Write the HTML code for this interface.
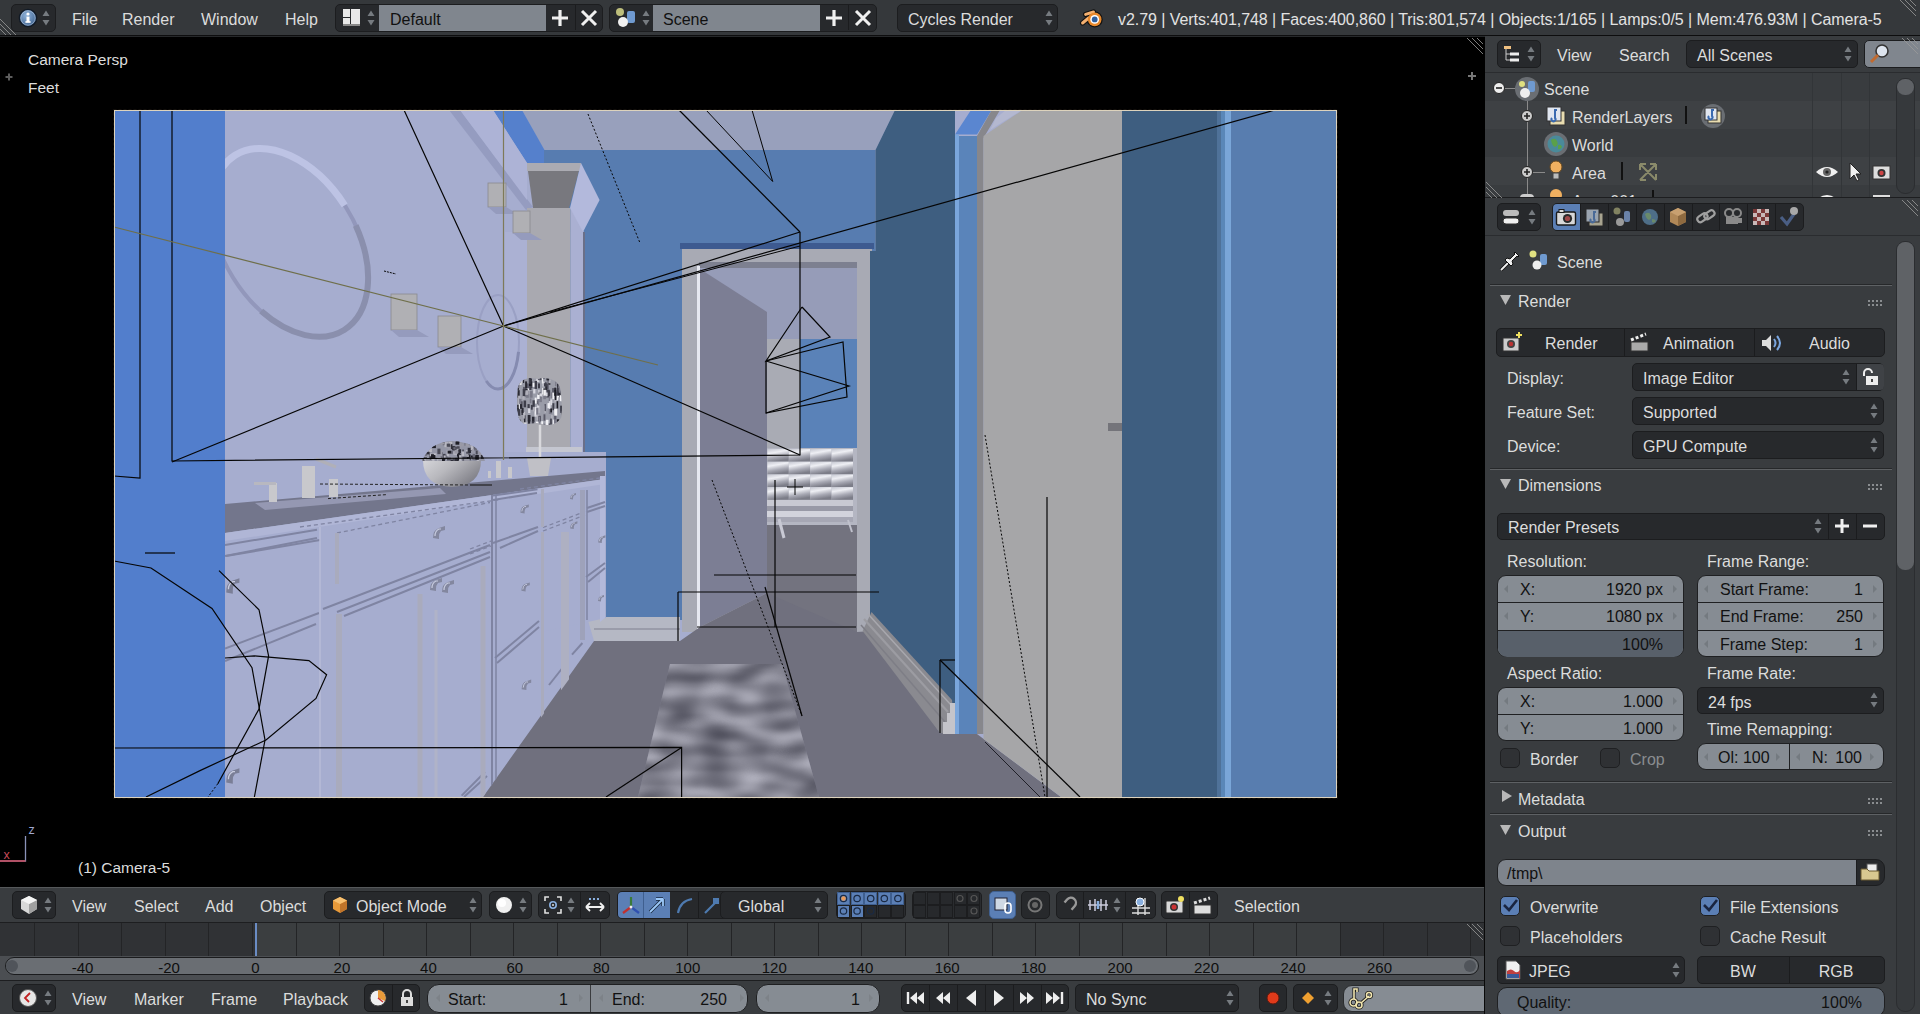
<!DOCTYPE html>
<html><head><meta charset="utf-8"><style>
html,body{margin:0;padding:0;width:1920px;height:1014px;overflow:hidden;background:#000;}
body{position:relative;font-family:"Liberation Sans",sans-serif;}
.r{position:absolute;box-sizing:border-box;}
.t{position:absolute;white-space:nowrap;line-height:1;}
</style></head><body>
<div class="r" style="left:0px;top:0px;width:1920px;height:35px;background:#35383b;"></div>
<div class="r" style="left:0px;top:35px;width:1920px;height:1px;background:#0d0d0e;"></div>
<div class="r" style="left:0px;top:36px;width:1920px;height:1px;background:#26282a;"></div>
<div class="r" style="left:11px;top:4px;width:45px;height:28px;background:#27292c;border:1px solid #1c1d1f;border-radius:5px;"></div>
<svg class="r" style="left:18px;top:8px;" width="20" height="20" viewBox="0 0 20 20"><defs><radialGradient id="ig" cx="0.4" cy="0.35" r="0.7"><stop offset="0" stop-color="#8fb3db"/><stop offset="1" stop-color="#3b5f8c"/></radialGradient></defs><circle cx="10" cy="10" r="8.6" fill="url(#ig)" stroke="#111a26" stroke-width="1.4"/><circle cx="10" cy="10" r="7.2" fill="none" stroke="#c8d8ea" stroke-width="0.8" opacity="0.6"/><rect x="8.5" y="8.6" width="3" height="5.6" fill="#fff"/><circle cx="10" cy="6" r="1.6" fill="#fff"/><rect x="7.4" y="13.2" width="5.2" height="1.6" fill="#fff"/></svg>
<svg class="r" style="left:41px;top:8px;" width="10" height="20" viewBox="0 0 10 20"><path d="M1.5 8 L5 2.5 L8.5 8 Z M1.5 12 L5 17.5 L8.5 12 Z" fill="#767b80"/></svg>
<div class="t" style="left:72px;top:12.46px;font-size:16px;color:#dcdcdc;">File</div>
<div class="t" style="left:122px;top:12.46px;font-size:16px;color:#dcdcdc;">Render</div>
<div class="t" style="left:201px;top:12.46px;font-size:16px;color:#dcdcdc;">Window</div>
<div class="t" style="left:285px;top:12.46px;font-size:16px;color:#dcdcdc;">Help</div>
<div class="r" style="left:335px;top:4px;width:268px;height:28px;background:#27292c;border:1px solid #1c1d1f;border-radius:5px;"></div>
<svg class="r" style="left:342px;top:8px;" width="20" height="20" viewBox="0 0 20 20"><rect x="1" y="1" width="7" height="8" fill="#e8e8e8"/><rect x="1" y="10" width="7" height="8" fill="#e8e8e8"/><rect x="9" y="1" width="9" height="17" fill="#e8e8e8"/><rect x="1" y="16" width="17" height="2" fill="#888"/></svg>
<svg class="r" style="left:366px;top:8px;" width="10" height="20" viewBox="0 0 10 20"><path d="M1.5 8 L5 2.5 L8.5 8 Z M1.5 12 L5 17.5 L8.5 12 Z" fill="#767b80"/></svg>
<div class="r" style="left:379px;top:5px;width:167px;height:26px;background:#80868e;"></div>
<div class="t" style="left:390px;top:12.46px;font-size:16px;color:#111;">Default</div>
<div class="r" style="left:575px;top:5px;width:1px;height:25px;background:#1b1c1e;"></div>
<svg class="r" style="left:550px;top:8px;" width="20" height="20" viewBox="0 0 20 20"><path d="M10 2 V18 M2 10 H18" stroke="#f0f0f0" stroke-width="3.2"/></svg>
<svg class="r" style="left:579px;top:8px;" width="20" height="20" viewBox="0 0 20 20"><path d="M3 3 L17 17 M17 3 L3 17" stroke="#f0f0f0" stroke-width="3"/></svg>
<div class="r" style="left:609px;top:4px;width:268px;height:28px;background:#27292c;border:1px solid #1c1d1f;border-radius:5px;"></div>
<svg class="r" style="left:614px;top:7px;" width="26" height="22" viewBox="0 0 26 22"><circle cx="6" cy="5" r="4" fill="#d8d88a" opacity="0.85"/><rect x="13" y="4" width="8" height="12" rx="2" fill="#6f9ad0"/><circle cx="9" cy="15" r="5" fill="#f0f0f0"/></svg>
<svg class="r" style="left:641px;top:8px;" width="10" height="20" viewBox="0 0 10 20"><path d="M1.5 8 L5 2.5 L8.5 8 Z M1.5 12 L5 17.5 L8.5 12 Z" fill="#767b80"/></svg>
<div class="r" style="left:653px;top:5px;width:167px;height:26px;background:#80868e;"></div>
<div class="t" style="left:663px;top:12.46px;font-size:16px;color:#111;">Scene</div>
<div class="r" style="left:848px;top:5px;width:1px;height:25px;background:#1b1c1e;"></div>
<svg class="r" style="left:824px;top:8px;" width="20" height="20" viewBox="0 0 20 20"><path d="M10 2 V18 M2 10 H18" stroke="#f0f0f0" stroke-width="3.2"/></svg>
<svg class="r" style="left:853px;top:8px;" width="20" height="20" viewBox="0 0 20 20"><path d="M3 3 L17 17 M17 3 L3 17" stroke="#f0f0f0" stroke-width="3"/></svg>
<div class="r" style="left:897px;top:4px;width:161px;height:28px;background:#27292c;border:1px solid #1c1d1f;border-radius:5px;"></div>
<div class="t" style="left:908px;top:12.46px;font-size:16px;color:#dcdcdc;">Cycles Render</div>
<svg class="r" style="left:1044px;top:8px;" width="10" height="20" viewBox="0 0 10 20"><path d="M1.5 8 L5 2.5 L8.5 8 Z M1.5 12 L5 17.5 L8.5 12 Z" fill="#767b80"/></svg>
<svg class="r" style="left:1078px;top:6px;" width="28" height="26" viewBox="0 0 28 26"><g stroke="#111" stroke-width="5.2" stroke-linecap="round"><path d="M7.6 8.4 L15.5 6"/><path d="M4.6 17 L10.6 12"/></g><circle cx="16.7" cy="13.4" r="8" fill="#111"/><g stroke="#f4b070" stroke-width="3" stroke-linecap="round"><path d="M7.6 8.4 L15.5 6"/><path d="M4.6 17 L10.6 12"/></g><circle cx="16.7" cy="13.4" r="6.8" fill="#e9892c"/><circle cx="16.7" cy="13.4" r="4.4" fill="#fff"/><circle cx="16.7" cy="13.4" r="2.9" fill="#2f5f9e"/></svg>
<div class="t" style="left:1118px;top:12.46px;font-size:16px;color:#e2e2e2;letter-spacing:-0.06px">v2.79 | Verts:401,748 | Faces:400,860 | Tris:801,574 | Objects:1/165 | Lamps:0/5 | Mem:476.93M | Camera-5</div>
<svg class="r" style="left:1900px;top:0px;" width="16" height="16" viewBox="0 0 16 16"><path d="M0 0 L16 16 M5 0 L16 11 M10 0 L16 6" stroke="#9a9a9a" stroke-width="1" fill="none" opacity="0.8"/></svg>
<svg class="r" style="left:0px;top:19px;" width="16" height="16" viewBox="0 0 16 16"><path d="M0 0 L16 16 M0 5 L11 16 M0 10 L6 16" stroke="#9a9a9a" stroke-width="1" fill="none" opacity="0.8"/></svg>
<div class="t" style="left:28px;top:51.88px;font-size:15.5px;color:#dcdcdc;">Camera Persp</div>
<div class="t" style="left:28px;top:79.88px;font-size:15.5px;color:#dcdcdc;">Feet</div>
<svg class="r" style="left:4px;top:72px;" width="10" height="10" viewBox="0 0 10 10"><path d="M5 1.5 V8.5 M1.5 5 H8.5" stroke="#5c5c5c" stroke-width="2"/></svg>
<svg class="r" style="left:1466px;top:71px;" width="12" height="10" viewBox="0 0 12 10"><path d="M6 1 V9 M2 5 H10" stroke="#777" stroke-width="2"/></svg>
<svg class="r" style="left:1467px;top:38px;" width="16" height="16" viewBox="0 0 16 16"><path d="M0 0 L16 16 M5 0 L16 11 M10 0 L16 6" stroke="#9a9a9a" stroke-width="1" fill="none" opacity="0.8"/></svg>
<div class="t" style="left:78px;top:859.88px;font-size:15.5px;color:#dcdcdc;">(1) Camera-5</div>
<svg class="r" style="left:0px;top:820px;" width="40" height="45" viewBox="0 0 40 45"><path d="M25.5 16 V41 H0" stroke="#8a92b8" stroke-width="1.3" fill="none"/><path d="M0 41 H25.5" stroke="#c8485a" stroke-width="1.5"/><text x="28.5" y="14" font-size="12.5" fill="#a0a8d0" font-family="Liberation Sans">z</text><text x="3.5" y="39" font-size="12.5" fill="#c84a5a" font-family="Liberation Sans">x</text></svg>
<svg class="r" style="left:0px;top:0px;overflow:hidden" width="1485" height="886" viewBox="0 0 1485 886"><polygon points="114,110 1337,110 1337,797 114,797" fill="#a6adcf" /><polygon points="114,110 225,110 225,797 114,797" fill="#527ecc" /><polygon points="522,110 895,110 875.5,150 544,150" fill="#98a0bc" /><polygon points="493,110 522,110 544.5,150 544.5,163 527,163" fill="#5580cc" /><polygon points="449,110 460,110 533,207 526,210" fill="#959cc0" /><polygon points="460,110 493,110 527,163 527,200" fill="#adb3d6" /><polygon points="544,150 875.5,150 875.5,620 544,620" fill="#577cb0" /><polygon points="680,243 874,243 874,249 680,249" fill="#3d5a90" /><polygon points="682,249 872,249 872,632 682,632" fill="#a8aab4" /><polygon points="699,266 857,266 857,339 699,339" fill="#969cb8" /><polygon points="699,262 857,262 857,268 699,268" fill="#7d8090" /><polygon points="767,339 857,339 857,450 767,450" fill="#5a82b8" /><polygon points="767,339 800,339 800,450 767,450" fill="#a9abb4" /><polygon points="767,450 857,450 857,632 767,632" fill="#73737f" /><defs><linearGradient id="tuft" x1="0" y1="0" x2="0.3" y2="1"><stop offset="0" stop-color="#c4c6d0"/><stop offset="0.35" stop-color="#eeeff4"/><stop offset="0.7" stop-color="#a8a9b4"/><stop offset="1" stop-color="#7c7d88"/></linearGradient></defs><polygon points="767,448 857,448 857,525 767,525" fill="#b4b6c2" /><rect x="767.4" y="449.0" width="21.4" height="12.7" fill="url(#tuft)"/><rect x="788.8" y="449.0" width="21.4" height="12.7" fill="url(#tuft)"/><rect x="810.2" y="449.0" width="21.4" height="12.7" fill="url(#tuft)"/><rect x="831.6" y="449.0" width="21.4" height="12.7" fill="url(#tuft)"/><rect x="767.4" y="461.7" width="21.4" height="12.7" fill="url(#tuft)"/><rect x="788.8" y="461.7" width="21.4" height="12.7" fill="url(#tuft)"/><rect x="810.2" y="461.7" width="21.4" height="12.7" fill="url(#tuft)"/><rect x="831.6" y="461.7" width="21.4" height="12.7" fill="url(#tuft)"/><rect x="767.4" y="474.4" width="21.4" height="12.7" fill="url(#tuft)"/><rect x="788.8" y="474.4" width="21.4" height="12.7" fill="url(#tuft)"/><rect x="810.2" y="474.4" width="21.4" height="12.7" fill="url(#tuft)"/><rect x="831.6" y="474.4" width="21.4" height="12.7" fill="url(#tuft)"/><rect x="767.4" y="487.1" width="21.4" height="12.7" fill="url(#tuft)"/><rect x="788.8" y="487.1" width="21.4" height="12.7" fill="url(#tuft)"/><rect x="810.2" y="487.1" width="21.4" height="12.7" fill="url(#tuft)"/><rect x="831.6" y="487.1" width="21.4" height="12.7" fill="url(#tuft)"/><polygon points="767,500 853,500 853,506 767,506" fill="#c8c9d2" /><polygon points="767,506 853,506 853,511 767,511" fill="#9899a6" /><polygon points="767,511 853,511 853,517 767,517" fill="#d2d3dc" /><polygon points="767,517 853,517 853,522 767,522" fill="#a6a7b4" /><polyline points="779,519 784,538" fill="none" stroke="#c8c9d4" stroke-width="3" /><polyline points="848,520 852,532" fill="none" stroke="#c0c1cc" stroke-width="2" /><polygon points="700,269 767,312 767,593 700,627" fill="#7c7e94" /><polygon points="697,266 700,266 700,632 697,632" fill="#e6e8f0" /><polygon points="587,617 680,617 680,641 594,641" fill="#b5b8c4" /><polygon points="594,628 680,628 680,630 594,630" fill="#9a9caa" /><polygon points="875.5,150 895,110 955,110 955,734 940,733 870,631 870,251 875.5,251" fill="#3e5e80" /><polygon points="483,797 594,641 680,641 700,627 767,593 857,632 871.5,631 940,733 977,734 1061,797" fill="#70707e" /><polygon points="871.5,612 952,700 955,734 940,733 862.6,631" fill="#8a8a90" /><polyline points="864,619 948,712" fill="none" stroke="#9c9ca2" stroke-width="2.2" /><polyline points="861,625 945,722" fill="none" stroke="#7e7e86" stroke-width="1.5" /><polyline points="868,614 951,705" fill="none" stroke="#a8a8ae" stroke-width="1.5" /><polygon points="943,734 943,722 947,722 947,713 950,713 950,703 955,703 955,734" fill="#c4c4ca" /><polygon points="670,664 782,664 819,797 638,797" fill="#7e7e8e" /><defs><filter id="rn" x="0" y="0" width="1" height="1" color-interpolation-filters="sRGB"><feTurbulence type="fractalNoise" baseFrequency="0.03 0.07" numOctaves="1" seed="3"/><feColorMatrix type="matrix" values="0.6 0 0 0 0.2  0.6 0 0 0 0.2  0.6 0 0 0 0.25  0 0 0 0 1"/></filter></defs><clipPath id="rc"><polygon points="670,664 782,664 819,797 638,797"/></clipPath><g clip-path="url(#rc)"><rect x="630" y="660" width="200" height="140" fill="#000" filter="url(#rn)"/></g><polygon points="955,134.6 971,110 991.7,110 977,134.6" fill="#5a86d0" /><polygon points="955,134.6 959,134.6 959,734 955,734" fill="#7aa6dc" /><polygon points="959,136 977,136 977,734 959,734" fill="#5a84ba" /><polygon points="977,136 991.7,110 1000,110 983.5,138 983.5,734 977,734" fill="#87878c" /><polygon points="983.5,136 1022.7,110 1122,110 1122,797 1061,797 983.5,739" fill="#a6a6a8" /><polygon points="996,118 1006,110 1022,110 990,130" fill="#b4b8d0" /><polygon points="1108,423 1122,423 1122,431 1108,431" fill="#74747a" /><polygon points="1122,110 1217,110 1217,797 1122,797" fill="#3e5e80" /><polygon points="1217,110 1221,110 1221,797 1217,797" fill="#4f7299" /><polygon points="1221,110 1225,110 1225,797 1221,797" fill="#5a87b8" /><polygon points="1225,110 1231,110 1231,797 1225,797" fill="#7aa6d8" /><polygon points="1231,110 1337,110 1337,797 1231,797" fill="#587daf" /><polygon points="505,232 527,232 527,452 505,452" fill="#abb1d3" /><polygon points="527,208 570.6,208 570.6,452 527,452" fill="#a9a9b0" /><polygon points="570.6,208 584,232 584,620 570.6,620" fill="#aab0d2" /><polygon points="583,232 585,232 585,620 583,620" fill="#6a6f88" /><polygon points="527,163 581,163 581,171 527,171" fill="#ababb2" /><polygon points="528,171 579,171 569,208 533,208" fill="#78787e" /><polygon points="581,163 599.6,200 583,232 570,208" fill="#b3b9dc" /><polygon points="526,447 582,447 582,453 526,453" fill="#c4c6d0" /><polygon points="505,452 606,452 606,618 505,640" fill="#a6adcf" /><polygon points="225,504 605,471 605,479 225,533" fill="#73768c" /><polygon points="225,533 605,479 605,484 225,541" fill="#b0b6d6" /><polygon points="255,503 440,488 446,494 265,510" fill="#9598b2" /><polygon points="600,476 605,476 605,618 600,622" fill="#b3b9da" /><clipPath id="cab"><polygon points="225,470 606,440 606,618 597,641 483,797 225,797"/></clipPath><g clip-path="url(#cab)"><polyline points="225,545 317,529.7" fill="none" stroke="#7f84a2" stroke-width="2" /><polyline points="225,556 317,538" fill="none" stroke="#7f84a2" stroke-width="2" /><polyline points="225,648.5 319,613" fill="none" stroke="#7f84a2" stroke-width="2" /><polyline points="225,661 316,624" fill="none" stroke="#7f84a2" stroke-width="2" /><polyline points="323,609 490,545" fill="none" stroke="#7f84a2" stroke-width="2" /><polyline points="337,612 490,552" fill="none" stroke="#7f84a2" stroke-width="2" /><polyline points="344,616 490,557" fill="none" stroke="#7f84a2" stroke-width="2" /><polyline points="493,495.5 537.5,489.3" fill="none" stroke="#7f84a2" stroke-width="2" /><polyline points="493,500 537,493" fill="none" stroke="#7f84a2" stroke-width="2" /><polyline points="493,543 538,527" fill="none" stroke="#7f84a2" stroke-width="2" /><polyline points="500,548 538,531" fill="none" stroke="#7f84a2" stroke-width="2" /><polyline points="587,508 605,502" fill="none" stroke="#7f84a2" stroke-width="2" /><polyline points="587,512 605,506" fill="none" stroke="#7f84a2" stroke-width="2" /><polyline points="586,577 605,563" fill="none" stroke="#7f84a2" stroke-width="2" /><polyline points="588,582 605,568" fill="none" stroke="#7f84a2" stroke-width="2" /><polyline points="495,658 539,621" fill="none" stroke="#7f84a2" stroke-width="2" /><polyline points="497,663 539,627" fill="none" stroke="#7f84a2" stroke-width="2" /><polyline points="549,685 564,666" fill="none" stroke="#7f84a2" stroke-width="2" /><polyline points="572,654.6 582.4,643" fill="none" stroke="#7f84a2" stroke-width="2" /><polyline points="461.6,795.6 485,772" fill="none" stroke="#7f84a2" stroke-width="2" /><polyline points="464,797 487,776" fill="none" stroke="#7f84a2" stroke-width="2" /><polyline points="226,556 320,540" fill="none" stroke="#7f84a2" stroke-width="2" /><polyline points="300,527 500,499.6" fill="none" stroke="#7f84a2" stroke-width="1.3" stroke-dasharray="4 3"/><polyline points="337,533 490,502.5" fill="none" stroke="#7f84a2" stroke-width="1.3" stroke-dasharray="4 3"/><polyline points="543,527.5 585,511.5" fill="none" stroke="#7f84a2" stroke-width="1.3" stroke-dasharray="4 3"/><polyline points="543,531 585,515" fill="none" stroke="#7f84a2" stroke-width="1.3" stroke-dasharray="4 3"/><polyline points="470,549 491,541" fill="none" stroke="#7f84a2" stroke-width="1.3" stroke-dasharray="4 3"/><polyline points="470,554 491,546" fill="none" stroke="#7f84a2" stroke-width="1.3" stroke-dasharray="4 3"/><polyline points="520,489 600,478" fill="none" stroke="#7f84a2" stroke-width="1.3" stroke-dasharray="4 3"/><rect x="319.25" y="527" width="1.5" height="270" fill="#b8bcd8"/><rect x="335.0" y="533" width="4" height="51" fill="#a9abbd"/><rect x="336.0" y="614" width="6" height="183" fill="#a9abbd"/><rect x="417.5" y="594" width="5" height="203" fill="#a9abbd"/><rect x="434.5" y="610" width="3" height="187" fill="#b0b3c8"/><rect x="480.5" y="566" width="5" height="231" fill="#a9abbd"/><rect x="491.0" y="495" width="2" height="302" fill="#7f84a2"/><rect x="495.25" y="495" width="1.5" height="302" fill="#7f84a2"/><rect x="541.0" y="489" width="3" height="38" fill="#a9abbd"/><rect x="541.0" y="532" width="3" height="228" fill="#a9abbd"/><rect x="561.0" y="532" width="8" height="158" fill="#aeb0c2"/><rect x="580.0" y="490" width="5" height="150" fill="#9ea2ba"/><rect x="586.25" y="490" width="1.5" height="130" fill="#7f84a2"/><g transform="translate(431 524) scale(1)"><path d="M2 14 q0 -8 6 -10 l6 -2 l0 4 l-4 1 q-2 2 -2 6 v2 Z" fill="#83879f"/><path d="M4 12 q0 -5 4 -7 l2 0" stroke="#c8cce0" stroke-width="1.2" fill="none"/></g><g transform="translate(428 576) scale(1)"><path d="M2 14 q0 -8 6 -10 l6 -2 l0 4 l-4 1 q-2 2 -2 6 v2 Z" fill="#83879f"/><path d="M4 12 q0 -5 4 -7 l2 0" stroke="#c8cce0" stroke-width="1.2" fill="none"/></g><g transform="translate(440 578) scale(1)"><path d="M2 14 q0 -8 6 -10 l6 -2 l0 4 l-4 1 q-2 2 -2 6 v2 Z" fill="#83879f"/><path d="M4 12 q0 -5 4 -7 l2 0" stroke="#c8cce0" stroke-width="1.2" fill="none"/></g><g transform="translate(519 503) scale(0.7)"><path d="M2 14 q0 -8 6 -10 l6 -2 l0 4 l-4 1 q-2 2 -2 6 v2 Z" fill="#83879f"/><path d="M4 12 q0 -5 4 -7 l2 0" stroke="#c8cce0" stroke-width="1.2" fill="none"/></g><g transform="translate(520 581) scale(0.7)"><path d="M2 14 q0 -8 6 -10 l6 -2 l0 4 l-4 1 q-2 2 -2 6 v2 Z" fill="#83879f"/><path d="M4 12 q0 -5 4 -7 l2 0" stroke="#c8cce0" stroke-width="1.2" fill="none"/></g><g transform="translate(520 678) scale(0.8)"><path d="M2 14 q0 -8 6 -10 l6 -2 l0 4 l-4 1 q-2 2 -2 6 v2 Z" fill="#83879f"/><path d="M4 12 q0 -5 4 -7 l2 0" stroke="#c8cce0" stroke-width="1.2" fill="none"/></g><g transform="translate(569 492) scale(0.5)"><path d="M2 14 q0 -8 6 -10 l6 -2 l0 4 l-4 1 q-2 2 -2 6 v2 Z" fill="#83879f"/><path d="M4 12 q0 -5 4 -7 l2 0" stroke="#c8cce0" stroke-width="1.2" fill="none"/></g><g transform="translate(569 520) scale(0.6)"><path d="M2 14 q0 -8 6 -10 l6 -2 l0 4 l-4 1 q-2 2 -2 6 v2 Z" fill="#83879f"/><path d="M4 12 q0 -5 4 -7 l2 0" stroke="#c8cce0" stroke-width="1.2" fill="none"/></g><g transform="translate(597 534) scale(0.6)"><path d="M2 14 q0 -8 6 -10 l6 -2 l0 4 l-4 1 q-2 2 -2 6 v2 Z" fill="#83879f"/><path d="M4 12 q0 -5 4 -7 l2 0" stroke="#c8cce0" stroke-width="1.2" fill="none"/></g><g transform="translate(597 594) scale(0.5)"><path d="M2 14 q0 -8 6 -10 l6 -2 l0 4 l-4 1 q-2 2 -2 6 v2 Z" fill="#83879f"/><path d="M4 12 q0 -5 4 -7 l2 0" stroke="#c8cce0" stroke-width="1.2" fill="none"/></g></g><g transform="translate(224 575) scale(1.1)"><path d="M2 16 q0 -9 6 -11 l6 -2 l0 4 l-4 1 q-2 2 -2 6 v3 Z" fill="#7a7e96"/><path d="M4 13 q0 -5 4 -7 l2 0" stroke="#c8cce0" stroke-width="1.2" fill="none"/></g><g transform="translate(224 765) scale(1.1)"><path d="M2 16 q0 -9 6 -11 l6 -2 l0 4 l-4 1 q-2 2 -2 6 v3 Z" fill="#7a7e96"/><path d="M4 13 q0 -5 4 -7 l2 0" stroke="#c8cce0" stroke-width="1.2" fill="none"/></g><clipPath id="mc"><rect x="225" y="110" width="300" height="300"/></clipPath><g clip-path="url(#mc)"><g transform="rotate(58 289.6 242.6)"><ellipse cx="289.6" cy="242.6" rx="103" ry="66.5" fill="none" stroke="#9297bb" stroke-width="4"/><ellipse cx="289.6" cy="242.6" rx="103" ry="66.5" fill="none" stroke="#8a8fad" stroke-width="6" stroke-dasharray="91 333 121 1000"/><ellipse cx="289.6" cy="242.6" rx="103" ry="66.5" fill="none" stroke="#bdc3e4" stroke-width="7" stroke-dasharray="0 212 189 1000"/></g></g><ellipse cx="498" cy="342" rx="21" ry="47" fill="none" stroke="#9aa0c4" stroke-width="2"/><ellipse cx="498" cy="342" rx="21" ry="47" fill="none" stroke="#858bb0" stroke-width="3" stroke-dasharray="0 10 60 200"/><rect x="488" y="183" width="18" height="24" fill="#b0b0b4" stroke="#8a8a90" stroke-width="0.8"/><polygon points="488,207 506,207 518,214 496,214" fill="#959bbd" /><rect x="513" y="211" width="17" height="22" fill="#b0b0b4" stroke="#8a8a90" stroke-width="0.8"/><polygon points="513,233 530,233 542,240 521,240" fill="#959bbd" /><rect x="391" y="294" width="26" height="36" fill="#b0b0b4" stroke="#8a8a90" stroke-width="0.8"/><polygon points="391,330 417,330 429,337 399,337" fill="#959bbd" /><rect x="438" y="316" width="23" height="31" fill="#b0b0b4" stroke="#8a8a90" stroke-width="0.8"/><polygon points="438,347 461,347 473,354 446,354" fill="#959bbd" /><defs><linearGradient id="bowlg" x1="0" y1="0" x2="1" y2="0.6"><stop offset="0" stop-color="#d6d6da"/><stop offset="0.45" stop-color="#b8b8bd"/><stop offset="1" stop-color="#7e7e86"/></linearGradient></defs><path d="M423 460 H481 Q481 486 452 487 Q423 486 423 460 Z" fill="url(#bowlg)"/><clipPath id="bc"><path d="M422 461 q8 -19 30 -20 q26 1 33 20 Z"/></clipPath><g clip-path="url(#bc)"><rect x="420" y="438" width="68" height="26" fill="#9496a6"/><rect x="462.4" y="457.3" width="3.9" height="5.0" fill="#6a6a78"/><rect x="482.7" y="438.8" width="3.4" height="3.0" fill="#9a9aa6"/><rect x="423.5" y="442.1" width="2.7" height="3.0" fill="#4a4a56"/><rect x="457.0" y="452.9" width="3.3" height="3.6" fill="#1e1e26"/><rect x="432.4" y="460.6" width="1.9" height="5.2" fill="#9a9aa6"/><rect x="429.4" y="454.1" width="1.8" height="5.9" fill="#2e2e38"/><rect x="420.4" y="458.1" width="3.7" height="3.2" fill="#2e2e38"/><rect x="485.4" y="452.0" width="3.1" height="2.7" fill="#6a6a78"/><rect x="485.9" y="443.1" width="2.2" height="3.4" fill="#9a9aa6"/><rect x="431.3" y="441.8" width="2.3" height="5.3" fill="#1e1e26"/><rect x="459.9" y="453.5" width="2.3" height="3.2" fill="#6a6a78"/><rect x="475.7" y="450.5" width="2.0" height="3.9" fill="#4a4a56"/><rect x="432.0" y="444.7" width="3.9" height="3.4" fill="#1e1e26"/><rect x="447.5" y="452.3" width="2.4" height="4.3" fill="#9a9aa6"/><rect x="420.6" y="439.2" width="3.1" height="5.8" fill="#2e2e38"/><rect x="428.1" y="444.4" width="2.4" height="3.4" fill="#9a9aa6"/><rect x="455.7" y="458.2" width="3.0" height="5.1" fill="#1e1e26"/><rect x="445.0" y="445.7" width="3.9" height="2.4" fill="#9a9aa6"/><rect x="443.2" y="453.9" width="2.3" height="5.7" fill="#2e2e38"/><rect x="457.1" y="446.1" width="2.3" height="5.2" fill="#4a4a56"/><rect x="462.6" y="456.7" width="4.0" height="2.6" fill="#4a4a56"/><rect x="423.3" y="463.7" width="3.8" height="2.1" fill="#b8b8c2"/><rect x="470.4" y="446.9" width="2.6" height="3.7" fill="#4a4a56"/><rect x="423.8" y="461.8" width="3.5" height="3.3" fill="#1e1e26"/><rect x="434.1" y="463.5" width="3.9" height="4.5" fill="#b8b8c2"/><rect x="473.6" y="440.8" width="2.4" height="2.2" fill="#9a9aa6"/><rect x="448.6" y="441.7" width="3.6" height="5.9" fill="#b8b8c2"/><rect x="450.8" y="450.7" width="2.3" height="3.1" fill="#6a6a78"/><rect x="452.0" y="461.4" width="2.4" height="6.0" fill="#1e1e26"/><rect x="485.3" y="454.3" width="3.7" height="2.7" fill="#9a9aa6"/><rect x="453.4" y="451.4" width="3.7" height="3.4" fill="#b8b8c2"/><rect x="473.4" y="458.1" width="3.0" height="2.1" fill="#6a6a78"/><rect x="440.8" y="452.5" width="2.2" height="3.9" fill="#6a6a78"/><rect x="472.3" y="456.0" width="3.9" height="3.4" fill="#4a4a56"/><rect x="432.1" y="460.1" width="2.9" height="3.0" fill="#9a9aa6"/><rect x="465.7" y="450.0" width="3.1" height="5.2" fill="#b8b8c2"/><rect x="443.7" y="454.7" width="3.8" height="3.6" fill="#6a6a78"/><rect x="482.7" y="442.5" width="2.6" height="3.5" fill="#6a6a78"/><rect x="442.7" y="441.7" width="2.0" height="3.4" fill="#2e2e38"/><rect x="478.1" y="445.4" width="3.3" height="4.9" fill="#1e1e26"/><rect x="431.7" y="458.3" width="2.8" height="5.7" fill="#b8b8c2"/><rect x="440.6" y="452.4" width="2.2" height="6.0" fill="#6a6a78"/><rect x="433.3" y="453.2" width="3.1" height="2.9" fill="#b8b8c2"/><rect x="466.6" y="454.4" width="4.0" height="5.9" fill="#1e1e26"/><rect x="431.3" y="461.2" width="2.3" height="2.7" fill="#1e1e26"/><rect x="433.1" y="438.9" width="2.4" height="4.7" fill="#9a9aa6"/><rect x="424.9" y="443.3" width="3.8" height="2.0" fill="#6a6a78"/><rect x="447.6" y="445.2" width="3.7" height="4.8" fill="#9a9aa6"/><rect x="457.2" y="463.1" width="3.0" height="2.4" fill="#b8b8c2"/><rect x="457.1" y="446.8" width="2.2" height="3.4" fill="#b8b8c2"/><rect x="428.8" y="448.6" width="3.1" height="3.5" fill="#b8b8c2"/><rect x="429.7" y="453.5" width="2.7" height="2.8" fill="#b8b8c2"/><rect x="429.0" y="440.4" width="1.5" height="2.4" fill="#6a6a78"/><rect x="458.5" y="454.0" width="2.3" height="5.5" fill="#2e2e38"/><rect x="458.4" y="449.2" width="2.7" height="3.9" fill="#2e2e38"/><rect x="468.2" y="448.0" width="3.0" height="3.0" fill="#2e2e38"/><rect x="486.7" y="450.9" width="1.5" height="5.8" fill="#9a9aa6"/><rect x="440.9" y="462.2" width="2.7" height="2.5" fill="#2e2e38"/><rect x="462.3" y="449.5" width="1.6" height="2.5" fill="#4a4a56"/><rect x="446.7" y="450.5" width="2.2" height="5.7" fill="#b8b8c2"/><rect x="473.2" y="444.4" width="3.6" height="4.9" fill="#4a4a56"/><rect x="439.4" y="450.8" width="2.8" height="5.5" fill="#9a9aa6"/><rect x="479.9" y="461.3" width="3.4" height="3.2" fill="#1e1e26"/><rect x="456.3" y="446.7" width="3.3" height="2.1" fill="#4a4a56"/><rect x="443.8" y="455.7" width="1.8" height="2.0" fill="#b8b8c2"/><rect x="457.6" y="455.8" width="3.7" height="4.2" fill="#1e1e26"/><rect x="421.0" y="458.2" width="3.0" height="4.8" fill="#9a9aa6"/><rect x="484.8" y="454.9" width="2.7" height="4.7" fill="#9a9aa6"/><rect x="468.9" y="461.4" width="3.6" height="2.3" fill="#9a9aa6"/><rect x="476.9" y="456.1" width="3.0" height="4.6" fill="#9a9aa6"/><rect x="452.1" y="446.1" width="2.7" height="4.2" fill="#2e2e38"/><rect x="453.8" y="446.6" width="2.6" height="4.2" fill="#2e2e38"/><rect x="423.3" y="457.0" width="3.5" height="5.2" fill="#4a4a56"/><rect x="465.1" y="438.7" width="2.6" height="2.3" fill="#6a6a78"/><rect x="447.6" y="450.7" width="3.6" height="2.9" fill="#1e1e26"/><rect x="463.9" y="462.8" width="3.7" height="6.0" fill="#6a6a78"/><rect x="468.0" y="449.4" width="3.0" height="3.7" fill="#2e2e38"/><rect x="431.0" y="454.2" width="2.9" height="4.6" fill="#1e1e26"/><rect x="470.7" y="445.3" width="2.9" height="5.0" fill="#b8b8c2"/><rect x="479.7" y="441.5" width="1.7" height="4.7" fill="#9a9aa6"/><rect x="453.3" y="447.2" width="2.4" height="2.2" fill="#6a6a78"/><rect x="467.4" y="441.9" width="3.2" height="3.2" fill="#6a6a78"/><rect x="484.1" y="452.3" width="2.2" height="4.2" fill="#2e2e38"/><rect x="437.3" y="457.5" width="3.9" height="5.2" fill="#b8b8c2"/><rect x="478.7" y="449.8" width="1.9" height="4.9" fill="#9a9aa6"/><rect x="464.5" y="440.2" width="1.6" height="5.5" fill="#6a6a78"/><rect x="454.4" y="449.8" width="3.7" height="3.9" fill="#9a9aa6"/><rect x="442.0" y="458.7" width="2.9" height="3.5" fill="#1e1e26"/><rect x="477.7" y="462.6" width="3.2" height="2.9" fill="#9a9aa6"/><rect x="427.9" y="463.3" width="2.7" height="2.8" fill="#6a6a78"/><rect x="467.7" y="447.8" width="2.2" height="5.7" fill="#2e2e38"/><rect x="468.0" y="458.7" width="1.8" height="5.3" fill="#9a9aa6"/><rect x="464.1" y="458.9" width="3.9" height="3.4" fill="#9a9aa6"/><rect x="422.5" y="463.8" width="3.4" height="3.6" fill="#2e2e38"/><rect x="426.6" y="438.9" width="2.0" height="4.0" fill="#2e2e38"/><rect x="483.7" y="455.2" width="1.5" height="3.9" fill="#4a4a56"/><rect x="480.5" y="454.1" width="2.3" height="3.8" fill="#9a9aa6"/><rect x="433.0" y="455.0" width="2.4" height="3.5" fill="#1e1e26"/><rect x="479.9" y="442.0" width="1.8" height="5.3" fill="#4a4a56"/><rect x="471.0" y="455.5" width="2.7" height="2.1" fill="#1e1e26"/><rect x="482.9" y="447.6" width="3.2" height="4.7" fill="#1e1e26"/><rect x="452.1" y="462.6" width="3.5" height="3.3" fill="#1e1e26"/><rect x="450.9" y="444.2" width="1.6" height="4.9" fill="#2e2e38"/><rect x="459.1" y="455.1" width="2.5" height="5.9" fill="#b8b8c2"/><rect x="444.8" y="446.1" width="2.4" height="2.3" fill="#9a9aa6"/><rect x="487.6" y="450.2" width="1.9" height="2.8" fill="#2e2e38"/><rect x="423.0" y="453.8" width="3.9" height="2.0" fill="#6a6a78"/><rect x="424.1" y="458.3" width="1.9" height="2.1" fill="#9a9aa6"/><rect x="476.8" y="459.8" width="2.4" height="2.4" fill="#b8b8c2"/><rect x="424.8" y="461.4" width="1.7" height="3.9" fill="#9a9aa6"/><rect x="466.4" y="454.8" width="2.5" height="2.2" fill="#9a9aa6"/><rect x="437.4" y="448.6" width="3.1" height="5.5" fill="#4a4a56"/><rect x="484.6" y="443.1" width="2.8" height="3.6" fill="#6a6a78"/><rect x="456.1" y="440.2" width="3.5" height="2.3" fill="#4a4a56"/><rect x="487.0" y="442.2" width="3.6" height="2.9" fill="#1e1e26"/><rect x="421.2" y="452.0" width="2.6" height="5.1" fill="#9a9aa6"/><rect x="455.5" y="441.5" width="3.8" height="3.2" fill="#1e1e26"/><rect x="450.5" y="459.5" width="2.9" height="2.6" fill="#2e2e38"/><rect x="452.9" y="458.3" width="3.5" height="3.3" fill="#4a4a56"/><rect x="428.8" y="440.1" width="3.2" height="5.2" fill="#2e2e38"/><rect x="485.8" y="455.3" width="1.7" height="4.8" fill="#4a4a56"/><rect x="423.3" y="443.2" width="3.7" height="5.5" fill="#4a4a56"/><rect x="424.9" y="458.0" width="3.4" height="4.2" fill="#9a9aa6"/><rect x="480.9" y="455.0" width="2.9" height="3.8" fill="#2e2e38"/><rect x="475.5" y="455.0" width="3.3" height="4.8" fill="#1e1e26"/><rect x="438.2" y="459.1" width="2.9" height="3.3" fill="#9a9aa6"/><rect x="440.8" y="441.6" width="3.2" height="3.1" fill="#9a9aa6"/><rect x="424.3" y="457.9" width="1.6" height="2.5" fill="#b8b8c2"/><rect x="485.9" y="459.5" width="3.6" height="5.8" fill="#9a9aa6"/><rect x="461.6" y="444.0" width="1.8" height="2.8" fill="#9a9aa6"/><rect x="444.4" y="442.2" width="3.6" height="4.9" fill="#b8b8c2"/><rect x="426.5" y="451.8" width="3.1" height="2.6" fill="#2e2e38"/><rect x="472.0" y="449.3" width="1.8" height="3.3" fill="#9a9aa6"/><rect x="482.2" y="450.0" width="1.9" height="2.2" fill="#9a9aa6"/><rect x="465.4" y="442.2" width="3.9" height="4.4" fill="#9a9aa6"/><rect x="427.0" y="459.2" width="3.2" height="2.8" fill="#9a9aa6"/><rect x="420.1" y="461.6" width="2.7" height="5.5" fill="#2e2e38"/><rect x="446.7" y="443.6" width="3.6" height="3.2" fill="#4a4a56"/><rect x="455.1" y="457.9" width="2.4" height="5.2" fill="#2e2e38"/><rect x="475.4" y="455.2" width="3.0" height="3.6" fill="#1e1e26"/><rect x="429.7" y="459.6" width="2.5" height="2.4" fill="#9a9aa6"/><rect x="447.0" y="457.6" width="3.8" height="2.8" fill="#4a4a56"/><rect x="474.2" y="446.4" width="2.7" height="4.1" fill="#6a6a78"/><rect x="426.2" y="443.2" width="1.5" height="4.0" fill="#6a6a78"/><rect x="459.9" y="442.8" width="1.6" height="4.7" fill="#9a9aa6"/><rect x="461.5" y="451.4" width="2.7" height="4.8" fill="#b8b8c2"/><rect x="447.1" y="463.5" width="3.8" height="4.8" fill="#b8b8c2"/><rect x="465.6" y="452.0" width="2.4" height="4.4" fill="#9a9aa6"/><rect x="466.2" y="451.6" width="2.2" height="2.1" fill="#4a4a56"/><rect x="472.6" y="453.9" width="2.5" height="5.9" fill="#6a6a78"/></g><path d="M527 458 H551 L548 476 H530 Z" fill="#c0c0c6"/><polyline points="540,425 540,457" fill="none" stroke="#d8d8dc" stroke-width="2.5" /><filter id="pn" x="0" y="0" width="1" height="1"><feTurbulence type="turbulence" baseFrequency="0.35 0.25" numOctaves="1" seed="7"/><feColorMatrix type="matrix" values="2 2 2 0 -1.6  2 2 2 0 -1.6  2 2 2 0 -1.5  0 0 0 0 1"/></filter><clipPath id="pc"><path d="M518 387 q2 -8 12 -9 l8 1 l6 -1 q14 1 16 10 q3 16 1 30 q-6 8 -14 7 l-10 -2 l-12 1 q-6 -2 -7 -10 q-2 -14 0 -27 Z"/></clipPath><g clip-path="url(#pc)"><rect x="512" y="372" width="58" height="60" fill="#9a9ca8"/><rect x="538.2" y="405.6" width="2.0" height="7.3" fill="#b0b0ba"/><rect x="523.0" y="420.2" width="2.3" height="7.0" fill="#b0b0ba"/><rect x="517.5" y="390.2" width="2.2" height="7.5" fill="#2a2a34"/><rect x="548.8" y="407.7" width="2.9" height="6.3" fill="#7a7a88"/><rect x="547.7" y="381.4" width="2.7" height="3.3" fill="#1c1c24"/><rect x="514.1" y="424.8" width="2.6" height="4.6" fill="#1c1c24"/><rect x="546.3" y="383.7" width="2.4" height="5.5" fill="#5a5a68"/><rect x="550.4" y="399.4" width="1.9" height="5.8" fill="#d8d8e0"/><rect x="566.0" y="377.0" width="1.8" height="4.1" fill="#d8d8e0"/><rect x="528.8" y="376.2" width="1.9" height="7.2" fill="#2a2a34"/><rect x="534.4" y="429.5" width="1.6" height="7.6" fill="#1c1c24"/><rect x="515.0" y="394.5" width="2.0" height="5.8" fill="#7a7a88"/><rect x="523.5" y="412.5" width="1.4" height="4.7" fill="#f0f0f4"/><rect x="567.9" y="417.5" width="1.4" height="6.5" fill="#2a2a34"/><rect x="512.6" y="399.9" width="1.5" height="5.8" fill="#b0b0ba"/><rect x="538.0" y="383.4" width="2.0" height="4.9" fill="#3e3e4a"/><rect x="534.9" y="431.4" width="1.7" height="7.9" fill="#1c1c24"/><rect x="558.6" y="390.2" width="1.6" height="5.0" fill="#1c1c24"/><rect x="561.6" y="410.5" width="1.3" height="3.7" fill="#2a2a34"/><rect x="537.6" y="372.6" width="2.7" height="4.9" fill="#f0f0f4"/><rect x="516.3" y="384.5" width="1.2" height="4.8" fill="#5a5a68"/><rect x="548.1" y="379.6" width="2.7" height="3.7" fill="#b0b0ba"/><rect x="534.4" y="409.6" width="2.8" height="7.1" fill="#d8d8e0"/><rect x="526.5" y="383.4" width="2.4" height="4.9" fill="#5a5a68"/><rect x="540.0" y="376.7" width="1.4" height="3.2" fill="#1c1c24"/><rect x="567.8" y="386.3" width="1.7" height="7.1" fill="#7a7a88"/><rect x="546.6" y="389.6" width="2.9" height="7.9" fill="#3e3e4a"/><rect x="519.3" y="400.8" width="1.7" height="7.6" fill="#2a2a34"/><rect x="523.8" y="373.0" width="1.9" height="4.2" fill="#d8d8e0"/><rect x="514.7" y="388.9" width="1.4" height="3.7" fill="#3e3e4a"/><rect x="538.1" y="391.9" width="2.3" height="7.6" fill="#3e3e4a"/><rect x="539.5" y="393.4" width="2.9" height="3.1" fill="#d8d8e0"/><rect x="548.9" y="400.9" width="1.8" height="8.0" fill="#d8d8e0"/><rect x="516.4" y="404.8" width="2.8" height="6.7" fill="#1c1c24"/><rect x="552.8" y="419.6" width="1.8" height="6.4" fill="#f0f0f4"/><rect x="564.2" y="424.3" width="2.9" height="3.2" fill="#7a7a88"/><rect x="541.0" y="372.9" width="1.9" height="3.1" fill="#7a7a88"/><rect x="516.2" y="377.4" width="3.0" height="7.4" fill="#2a2a34"/><rect x="554.2" y="395.3" width="2.0" height="7.2" fill="#b0b0ba"/><rect x="516.9" y="417.0" width="1.8" height="3.4" fill="#1c1c24"/><rect x="513.3" y="429.4" width="2.1" height="6.1" fill="#2a2a34"/><rect x="565.4" y="387.3" width="1.9" height="3.7" fill="#1c1c24"/><rect x="547.5" y="403.1" width="2.4" height="5.2" fill="#f0f0f4"/><rect x="563.7" y="391.6" width="1.6" height="5.2" fill="#d8d8e0"/><rect x="558.7" y="426.9" width="1.9" height="5.9" fill="#5a5a68"/><rect x="530.4" y="380.2" width="1.8" height="7.5" fill="#b0b0ba"/><rect x="514.4" y="375.8" width="2.7" height="3.6" fill="#d8d8e0"/><rect x="539.3" y="427.5" width="1.9" height="5.6" fill="#7a7a88"/><rect x="551.0" y="415.0" width="1.8" height="7.1" fill="#b0b0ba"/><rect x="528.1" y="408.5" width="2.2" height="4.5" fill="#d8d8e0"/><rect x="557.9" y="373.1" width="1.9" height="3.9" fill="#3e3e4a"/><rect x="556.6" y="388.0" width="2.6" height="7.9" fill="#3e3e4a"/><rect x="518.7" y="378.5" width="2.9" height="6.4" fill="#f0f0f4"/><rect x="523.6" y="400.5" width="2.5" height="6.8" fill="#3e3e4a"/><rect x="543.0" y="374.2" width="1.7" height="4.7" fill="#5a5a68"/><rect x="552.4" y="403.2" width="1.9" height="7.0" fill="#3e3e4a"/><rect x="564.6" y="377.2" width="1.4" height="5.3" fill="#7a7a88"/><rect x="548.3" y="426.6" width="2.2" height="6.3" fill="#7a7a88"/><rect x="541.2" y="421.2" width="2.0" height="6.3" fill="#f0f0f4"/><rect x="523.9" y="415.3" width="1.6" height="7.5" fill="#2a2a34"/><rect x="568.9" y="430.6" width="1.7" height="6.6" fill="#f0f0f4"/><rect x="512.9" y="402.3" width="2.0" height="5.8" fill="#1c1c24"/><rect x="556.6" y="401.2" width="1.6" height="7.3" fill="#1c1c24"/><rect x="536.9" y="374.1" width="2.4" height="7.6" fill="#f0f0f4"/><rect x="539.3" y="432.0" width="2.9" height="5.5" fill="#b0b0ba"/><rect x="567.1" y="377.2" width="2.0" height="5.8" fill="#5a5a68"/><rect x="560.2" y="405.7" width="2.1" height="7.2" fill="#3e3e4a"/><rect x="544.5" y="390.7" width="2.9" height="7.4" fill="#7a7a88"/><rect x="547.3" y="390.3" width="2.9" height="5.6" fill="#3e3e4a"/><rect x="545.2" y="384.1" width="2.1" height="6.0" fill="#2a2a34"/><rect x="513.6" y="430.2" width="2.2" height="7.9" fill="#7a7a88"/><rect x="519.1" y="377.6" width="1.3" height="5.7" fill="#3e3e4a"/><rect x="536.0" y="429.4" width="1.7" height="5.4" fill="#7a7a88"/><rect x="519.4" y="398.0" width="2.1" height="3.5" fill="#b0b0ba"/><rect x="536.3" y="373.8" width="1.4" height="6.9" fill="#d8d8e0"/><rect x="513.3" y="383.6" width="1.2" height="4.4" fill="#5a5a68"/><rect x="554.0" y="386.7" width="1.4" height="6.7" fill="#b0b0ba"/><rect x="519.1" y="402.6" width="2.5" height="6.5" fill="#d8d8e0"/><rect x="563.0" y="373.4" width="2.7" height="6.1" fill="#7a7a88"/><rect x="543.2" y="423.8" width="2.2" height="7.3" fill="#5a5a68"/><rect x="547.5" y="423.4" width="2.8" height="6.1" fill="#5a5a68"/><rect x="532.2" y="382.9" width="2.8" height="4.0" fill="#f0f0f4"/><rect x="557.1" y="383.7" width="1.4" height="4.2" fill="#2a2a34"/><rect x="554.1" y="387.6" width="2.0" height="7.7" fill="#2a2a34"/><rect x="543.5" y="414.3" width="1.9" height="6.4" fill="#5a5a68"/><rect x="513.0" y="384.1" width="2.8" height="7.8" fill="#f0f0f4"/><rect x="518.7" y="402.3" width="2.1" height="6.4" fill="#f0f0f4"/><rect x="523.0" y="376.2" width="1.2" height="6.8" fill="#2a2a34"/><rect x="547.6" y="426.3" width="1.5" height="3.9" fill="#b0b0ba"/><rect x="523.8" y="422.4" width="2.9" height="3.5" fill="#d8d8e0"/><rect x="515.6" y="429.1" width="1.3" height="3.5" fill="#b0b0ba"/><rect x="534.7" y="397.6" width="2.0" height="6.0" fill="#f0f0f4"/><rect x="512.8" y="414.1" width="1.5" height="5.3" fill="#5a5a68"/><rect x="554.9" y="396.3" width="2.3" height="3.5" fill="#5a5a68"/><rect x="558.0" y="391.4" width="2.6" height="6.5" fill="#2a2a34"/><rect x="561.9" y="409.8" width="2.2" height="4.0" fill="#7a7a88"/><rect x="545.9" y="392.5" width="1.7" height="3.6" fill="#d8d8e0"/><rect x="555.1" y="381.6" width="1.4" height="4.6" fill="#7a7a88"/><rect x="543.3" y="394.2" width="2.6" height="5.0" fill="#7a7a88"/><rect x="553.9" y="376.2" width="1.7" height="3.5" fill="#f0f0f4"/><rect x="563.5" y="431.4" width="1.6" height="7.7" fill="#1c1c24"/><rect x="550.6" y="392.3" width="2.2" height="5.7" fill="#7a7a88"/><rect x="534.6" y="432.0" width="2.5" height="6.8" fill="#5a5a68"/><rect x="568.8" y="373.4" width="2.5" height="4.3" fill="#2a2a34"/><rect x="535.3" y="375.0" width="2.4" height="3.1" fill="#5a5a68"/><rect x="527.0" y="388.5" width="2.2" height="5.5" fill="#f0f0f4"/><rect x="568.1" y="406.1" width="2.3" height="7.0" fill="#2a2a34"/><rect x="516.4" y="407.9" width="1.9" height="7.7" fill="#1c1c24"/><rect x="534.4" y="430.2" width="2.2" height="6.0" fill="#b0b0ba"/><rect x="536.9" y="401.7" width="2.1" height="6.0" fill="#d8d8e0"/><rect x="533.2" y="389.1" width="2.2" height="4.4" fill="#d8d8e0"/><rect x="553.6" y="389.8" width="2.6" height="5.9" fill="#1c1c24"/><rect x="548.7" y="396.5" width="1.3" height="4.6" fill="#7a7a88"/><rect x="535.1" y="406.9" width="1.3" height="7.5" fill="#f0f0f4"/><rect x="536.9" y="400.7" width="1.3" height="3.5" fill="#5a5a68"/><rect x="559.0" y="426.6" width="3.0" height="7.1" fill="#3e3e4a"/><rect x="547.0" y="378.9" width="2.0" height="4.0" fill="#7a7a88"/><rect x="515.0" y="403.7" width="1.9" height="3.7" fill="#2a2a34"/><rect x="536.2" y="408.1" width="1.9" height="6.7" fill="#7a7a88"/><rect x="559.3" y="380.2" width="2.5" height="4.2" fill="#d8d8e0"/><rect x="518.6" y="425.6" width="1.7" height="6.0" fill="#f0f0f4"/><rect x="554.1" y="413.9" width="2.3" height="6.8" fill="#5a5a68"/><rect x="523.0" y="386.9" width="2.8" height="3.2" fill="#5a5a68"/><rect x="515.5" y="388.3" width="1.2" height="3.2" fill="#7a7a88"/><rect x="524.9" y="388.7" width="2.8" height="3.8" fill="#2a2a34"/><rect x="525.6" y="430.9" width="2.1" height="4.1" fill="#b0b0ba"/><rect x="531.9" y="416.7" width="2.6" height="5.2" fill="#2a2a34"/><rect x="559.7" y="422.3" width="2.0" height="6.7" fill="#5a5a68"/><rect x="534.6" y="381.0" width="2.4" height="7.9" fill="#3e3e4a"/><rect x="530.9" y="404.9" width="2.0" height="4.8" fill="#3e3e4a"/><rect x="517.6" y="424.5" width="2.2" height="5.2" fill="#2a2a34"/><rect x="544.9" y="420.9" width="1.7" height="6.9" fill="#b0b0ba"/><rect x="516.4" y="384.8" width="2.5" height="5.5" fill="#2a2a34"/><rect x="556.3" y="391.7" width="1.6" height="6.3" fill="#3e3e4a"/><rect x="531.0" y="426.4" width="2.5" height="5.8" fill="#f0f0f4"/><rect x="565.3" y="428.4" width="2.0" height="7.0" fill="#d8d8e0"/><rect x="529.7" y="391.1" width="2.9" height="6.6" fill="#7a7a88"/><rect x="541.9" y="377.1" width="1.2" height="6.4" fill="#f0f0f4"/><rect x="545.9" y="419.8" width="2.6" height="5.7" fill="#f0f0f4"/><rect x="560.5" y="405.8" width="1.4" height="5.3" fill="#3e3e4a"/><rect x="561.6" y="420.7" width="2.1" height="5.7" fill="#5a5a68"/><rect x="544.9" y="430.0" width="1.3" height="5.7" fill="#7a7a88"/><rect x="557.7" y="377.0" width="1.7" height="3.5" fill="#2a2a34"/><rect x="530.2" y="373.6" width="1.4" height="7.1" fill="#3e3e4a"/><rect x="536.5" y="414.7" width="2.6" height="5.6" fill="#b0b0ba"/><rect x="556.4" y="395.7" width="2.7" height="4.7" fill="#f0f0f4"/><rect x="519.9" y="401.3" width="2.5" height="7.6" fill="#2a2a34"/><rect x="535.8" y="421.6" width="2.7" height="7.0" fill="#f0f0f4"/><rect x="560.4" y="425.3" width="2.1" height="6.6" fill="#1c1c24"/><rect x="558.5" y="397.3" width="2.8" height="4.2" fill="#7a7a88"/><rect x="521.4" y="410.1" width="1.8" height="4.9" fill="#3e3e4a"/><rect x="542.7" y="388.4" width="2.0" height="6.7" fill="#1c1c24"/><rect x="529.6" y="381.3" width="2.8" height="6.8" fill="#3e3e4a"/><rect x="513.0" y="400.9" width="1.8" height="4.0" fill="#1c1c24"/><rect x="532.8" y="407.3" width="2.3" height="4.1" fill="#b0b0ba"/><rect x="522.7" y="388.9" width="2.8" height="7.7" fill="#3e3e4a"/><rect x="548.4" y="428.5" width="2.7" height="5.4" fill="#b0b0ba"/><rect x="535.4" y="429.3" width="2.1" height="4.1" fill="#2a2a34"/><rect x="514.9" y="428.9" width="3.0" height="7.0" fill="#7a7a88"/><rect x="556.9" y="419.3" width="2.4" height="4.2" fill="#1c1c24"/><rect x="512.6" y="400.4" width="2.0" height="4.2" fill="#f0f0f4"/><rect x="536.4" y="424.5" width="1.5" height="4.6" fill="#7a7a88"/><rect x="527.0" y="424.2" width="2.3" height="8.0" fill="#3e3e4a"/><rect x="527.5" y="404.1" width="2.2" height="3.9" fill="#3e3e4a"/><rect x="523.8" y="427.0" width="2.7" height="3.4" fill="#3e3e4a"/><rect x="527.7" y="415.0" width="2.8" height="6.5" fill="#2a2a34"/><rect x="516.8" y="416.9" width="1.2" height="3.9" fill="#d8d8e0"/><rect x="523.2" y="412.9" width="1.6" height="5.7" fill="#b0b0ba"/><rect x="542.5" y="381.5" width="1.8" height="5.0" fill="#d8d8e0"/><rect x="544.3" y="431.8" width="1.8" height="6.4" fill="#2a2a34"/><rect x="518.1" y="395.7" width="2.5" height="6.9" fill="#b0b0ba"/><rect x="519.1" y="398.7" width="2.5" height="5.4" fill="#7a7a88"/><rect x="529.0" y="378.8" width="2.7" height="7.2" fill="#1c1c24"/><rect x="553.7" y="426.1" width="1.7" height="4.9" fill="#3e3e4a"/><rect x="543.3" y="389.9" width="2.6" height="5.8" fill="#f0f0f4"/><rect x="517.0" y="383.3" width="2.5" height="4.6" fill="#7a7a88"/><rect x="566.8" y="405.8" width="2.0" height="4.9" fill="#f0f0f4"/><rect x="517.9" y="409.3" width="2.4" height="6.5" fill="#3e3e4a"/><rect x="522.4" y="396.1" width="2.3" height="3.5" fill="#b0b0ba"/><rect x="525.1" y="381.4" width="2.0" height="6.9" fill="#2a2a34"/><rect x="531.8" y="421.4" width="2.4" height="6.8" fill="#3e3e4a"/><rect x="559.6" y="395.2" width="2.9" height="6.1" fill="#f0f0f4"/><rect x="554.2" y="408.8" width="3.0" height="6.9" fill="#f0f0f4"/><rect x="550.3" y="408.5" width="1.7" height="3.9" fill="#1c1c24"/><rect x="529.8" y="398.5" width="1.6" height="4.7" fill="#7a7a88"/><rect x="529.0" y="378.2" width="1.7" height="5.7" fill="#3e3e4a"/><rect x="529.3" y="386.0" width="2.2" height="4.0" fill="#3e3e4a"/><rect x="566.1" y="431.9" width="2.2" height="3.1" fill="#5a5a68"/><rect x="550.2" y="418.6" width="1.6" height="5.9" fill="#3e3e4a"/><rect x="552.4" y="391.8" width="1.7" height="7.4" fill="#f0f0f4"/><rect x="538.2" y="415.8" width="2.8" height="5.7" fill="#5a5a68"/><rect x="544.5" y="405.6" width="1.5" height="6.7" fill="#d8d8e0"/><rect x="564.0" y="392.1" width="1.4" height="7.1" fill="#3e3e4a"/><rect x="528.7" y="425.8" width="2.6" height="4.8" fill="#5a5a68"/><rect x="521.6" y="407.9" width="2.0" height="5.0" fill="#2a2a34"/><rect x="557.4" y="427.8" width="1.8" height="6.4" fill="#3e3e4a"/><rect x="554.8" y="394.9" width="1.5" height="5.1" fill="#1c1c24"/><rect x="513.9" y="403.7" width="2.2" height="3.9" fill="#2a2a34"/><rect x="542.1" y="387.8" width="1.3" height="6.9" fill="#f0f0f4"/><rect x="553.9" y="419.3" width="2.9" height="6.0" fill="#7a7a88"/><rect x="539.3" y="396.7" width="2.6" height="5.4" fill="#7a7a88"/><rect x="569.7" y="422.3" width="2.7" height="3.6" fill="#7a7a88"/><rect x="518.6" y="428.3" width="2.1" height="5.2" fill="#f0f0f4"/><rect x="564.4" y="391.2" width="1.7" height="6.1" fill="#1c1c24"/><rect x="537.1" y="394.6" width="2.6" height="4.5" fill="#f0f0f4"/><rect x="546.4" y="376.2" width="2.7" height="4.2" fill="#2a2a34"/><rect x="562.6" y="430.4" width="2.5" height="5.6" fill="#b0b0ba"/><rect x="525.9" y="390.4" width="2.9" height="7.4" fill="#7a7a88"/><rect x="570.0" y="415.8" width="2.8" height="5.1" fill="#f0f0f4"/><rect x="558.7" y="385.3" width="2.2" height="7.5" fill="#7a7a88"/><rect x="517.7" y="419.5" width="2.8" height="5.9" fill="#2a2a34"/><rect x="538.3" y="389.8" width="1.2" height="3.9" fill="#d8d8e0"/><rect x="537.6" y="399.0" width="1.5" height="6.5" fill="#7a7a88"/><rect x="525.4" y="390.4" width="2.8" height="4.5" fill="#b0b0ba"/><rect x="540.9" y="428.0" width="2.8" height="4.0" fill="#b0b0ba"/><rect x="561.8" y="413.6" width="1.6" height="7.2" fill="#1c1c24"/><rect x="532.5" y="400.3" width="2.3" height="6.5" fill="#3e3e4a"/><rect x="544.5" y="404.0" width="1.5" height="7.4" fill="#5a5a68"/><rect x="514.9" y="378.4" width="2.9" height="4.4" fill="#f0f0f4"/><rect x="536.4" y="424.7" width="2.5" height="7.7" fill="#f0f0f4"/><rect x="537.8" y="376.7" width="2.8" height="3.6" fill="#5a5a68"/><rect x="552.1" y="388.1" width="2.1" height="4.5" fill="#5a5a68"/><rect x="527.9" y="420.2" width="2.3" height="4.1" fill="#2a2a34"/><rect x="529.5" y="427.6" width="1.7" height="6.2" fill="#5a5a68"/><rect x="517.2" y="431.0" width="2.9" height="3.4" fill="#b0b0ba"/><rect x="564.6" y="372.4" width="2.2" height="5.1" fill="#d8d8e0"/><rect x="545.0" y="381.9" width="1.6" height="4.4" fill="#5a5a68"/><rect x="543.8" y="383.2" width="3.0" height="3.2" fill="#3e3e4a"/><rect x="538.8" y="417.0" width="1.2" height="7.5" fill="#7a7a88"/><rect x="515.5" y="375.8" width="1.8" height="5.4" fill="#f0f0f4"/></g><rect x="302" y="466" width="13" height="32" fill="#c8c8cc"/><rect x="329" y="479" width="9" height="18" fill="#c8c8cc"/><rect x="269" y="483" width="8" height="19" fill="#c8c8cc"/><rect x="496" y="461" width="5" height="17" fill="#c8c8cc"/><rect x="508" y="467" width="4" height="11" fill="#c8c8cc"/><rect x="488" y="471" width="3" height="7" fill="#c8c8cc"/><polyline points="254,483.5 276,483.5" fill="none" stroke="#b8b8c0" stroke-width="3" /><polyline points="320,484 470,485" fill="none" stroke="#222" stroke-width="1" stroke-dasharray="3 2"/><polyline points="470,485 492,485" fill="none" stroke="#222" stroke-width="1.2" /><polyline points="328,498.6 387,494.6" fill="none" stroke="#222" stroke-width="1" stroke-dasharray="3 2"/><polyline points="316,459 336,467" fill="none" stroke="#b0b0b8" stroke-width="3" /><polyline points="404,110 503.5,326 620,376 800,455" fill="none" stroke="#050505" stroke-width="1.2" /><polyline points="114,795 503.5,326" fill="none" stroke="#050505" stroke-width="0" /><polyline points="218,797 503.5,326" fill="none" stroke="#050505" stroke-width="0" /><polyline points="172,462 503.5,326 800,232" fill="none" stroke="#050505" stroke-width="1.2" /><polyline points="503.5,326 1275,110" fill="none" stroke="#050505" stroke-width="1.2" /><polyline points="550,312 800,246" fill="none" stroke="#050505" stroke-width="1" /><polyline points="800,232 800,455 172,461 172,110" fill="none" stroke="#050505" stroke-width="1.2" /><polyline points="140,110 140,478 114,476" fill="none" stroke="#050505" stroke-width="1.2" /><polyline points="114,227 503.5,326 658,365" fill="none" stroke="#6f6f4a" stroke-width="1.2" /><polyline points="503.5,110 503.5,460" fill="none" stroke="#7e7a58" stroke-width="1.2" /><polyline points="588,114 640,243" fill="none" stroke="#050505" stroke-width="1" stroke-dasharray="2 2"/><polyline points="752,110 772.7,181.5 706,110" fill="none" stroke="#050505" stroke-width="1" /><polyline points="679,110 800,232" fill="none" stroke="#050505" stroke-width="1.2" /><polyline points="802,307 830,337 766,361 802,307" fill="none" stroke="#050505" stroke-width="1.2" /><polyline points="766,361 766,413 847,397 843,342 766,361" fill="none" stroke="#050505" stroke-width="1.2" /><polyline points="766,361 849,386 766,413" fill="none" stroke="#050505" stroke-width="1.2" /><polyline points="775,480 775,627" fill="none" stroke="#050505" stroke-width="1.2" /><polyline points="714,575 856,575" fill="none" stroke="#050505" stroke-width="1.2" /><polyline points="678,592 879,592" fill="none" stroke="#050505" stroke-width="1.2" /><polyline points="697,627 856,627" fill="none" stroke="#050505" stroke-width="1.2" /><polyline points="678,592 678,641" fill="none" stroke="#050505" stroke-width="1.2" /><polyline points="712,480 802,716" fill="none" stroke="#050505" stroke-width="1" stroke-dasharray="2 2"/><polyline points="765,587 802,716" fill="none" stroke="#050505" stroke-width="1.2" /><polyline points="787,487 803,487" fill="none" stroke="#050505" stroke-width="1" /><polyline points="795,479 795,495" fill="none" stroke="#050505" stroke-width="1" /><polyline points="114,748 681.6,747.4 681.6,797" fill="none" stroke="#050505" stroke-width="1.2" /><polyline points="681.6,747.4 606,797" fill="none" stroke="#050505" stroke-width="1.2" /><polyline points="940,660 955,660" fill="none" stroke="#050505" stroke-width="1.2" /><polyline points="940,660 940,733" fill="none" stroke="#050505" stroke-width="1.2" /><polyline points="940,660 1080,797" fill="none" stroke="#050505" stroke-width="1.2" /><polyline points="985,742 1040,797" fill="none" stroke="#202028" stroke-width="1" /><polyline points="1047,497 1047,797" fill="none" stroke="#050505" stroke-width="1.2" /><polyline points="985,435 1045,797" fill="none" stroke="#050505" stroke-width="1" stroke-dasharray="2 2"/><polyline points="114,561 151,568 212,608.5 252,667.7 265,740 254.4,797" fill="none" stroke="#050505" stroke-width="1.2" /><polyline points="219,570.6 259,609.7 268.6,655.9 259,709 217.8,783.7" fill="none" stroke="#050505" stroke-width="1.2" /><polyline points="217.8,783.7 208,797" fill="none" stroke="#050505" stroke-width="1" stroke-dasharray="2 2"/><polyline points="225,658 254.4,655.9 308.9,660.6 326.6,674.8 316,698.5 266,740 200,770.6 146,797" fill="none" stroke="#050505" stroke-width="1.2" /><polyline points="145,553 175,553" fill="none" stroke="#050505" stroke-width="1.2" /><polyline points="384,271 396,274" fill="none" stroke="#050505" stroke-width="1" stroke-dasharray="2 1"/><rect x="114.5" y="110.5" width="1222" height="687" fill="none" stroke="#ddd3bd" stroke-width="1"/><rect x="113.5" y="109.5" width="1224" height="689" fill="none" stroke="#14100c" stroke-width="1" stroke-dasharray="3 2"/></svg>
<div class="r" style="left:0px;top:887px;width:1485px;height:36px;background:#393c3f;"></div>
<div class="r" style="left:0px;top:887px;width:1485px;height:1px;background:#55585a;"></div>
<div class="r" style="left:0px;top:922px;width:1485px;height:1px;background:#1d1e20;"></div>
<div class="r" style="left:12px;top:891px;width:44px;height:28px;background:#27292c;border:1px solid #1c1d1f;border-radius:5px;"></div>
<svg class="r" style="left:18px;top:894px;" width="22" height="22" viewBox="0 0 22 22"><path d="M11 2 L19 6 V15 L11 20 L3 15 V6 Z" fill="#d8d8d8"/><path d="M11 10 L19 6 V15 L11 20 Z" fill="#a0a0a0"/><path d="M3 6 L11 2 L19 6 L11 10 Z" fill="#f4f4f4"/></svg>
<svg class="r" style="left:43px;top:895px;" width="10" height="20" viewBox="0 0 10 20"><path d="M1.5 8 L5 2.5 L8.5 8 Z M1.5 12 L5 17.5 L8.5 12 Z" fill="#767b80"/></svg>
<div class="t" style="left:72px;top:899.46px;font-size:16px;color:#dcdcdc;">View</div>
<div class="t" style="left:134px;top:899.46px;font-size:16px;color:#dcdcdc;">Select</div>
<div class="t" style="left:205px;top:899.46px;font-size:16px;color:#dcdcdc;">Add</div>
<div class="t" style="left:260px;top:899.46px;font-size:16px;color:#dcdcdc;">Object</div>
<div class="r" style="left:324px;top:891px;width:158px;height:28px;background:#27292c;border:1px solid #1c1d1f;border-radius:5px;"></div>
<svg class="r" style="left:330px;top:895px;" width="20" height="20" viewBox="0 0 20 20"><path d="M10 2 L17 5.5 V14 L10 18 L3 14 V5.5 Z" fill="#e89a3a"/><path d="M10 9 L17 5.5 V14 L10 18 Z" fill="#c0742a"/><path d="M3 5.5 L10 2 L17 5.5 L10 9 Z" fill="#f8c070"/></svg>
<div class="t" style="left:356px;top:899.46px;font-size:16px;color:#dcdcdc;">Object Mode</div>
<svg class="r" style="left:468px;top:895px;" width="10" height="20" viewBox="0 0 10 20"><path d="M1.5 8 L5 2.5 L8.5 8 Z M1.5 12 L5 17.5 L8.5 12 Z" fill="#767b80"/></svg>
<div class="r" style="left:489px;top:891px;width:43px;height:28px;background:#27292c;border:1px solid #1c1d1f;border-radius:5px;"></div>
<svg class="r" style="left:494px;top:895px;" width="20" height="20" viewBox="0 0 20 20"><circle cx="10" cy="10" r="8" fill="#f0f0f0"/><circle cx="8" cy="8" r="4" fill="#fff"/></svg>
<svg class="r" style="left:518px;top:895px;" width="10" height="20" viewBox="0 0 10 20"><path d="M1.5 8 L5 2.5 L8.5 8 Z M1.5 12 L5 17.5 L8.5 12 Z" fill="#767b80"/></svg>
<div class="r" style="left:538px;top:891px;width:72px;height:28px;background:#27292c;border:1px solid #1c1d1f;border-radius:5px;"></div>
<svg class="r" style="left:542px;top:894px;" width="22" height="22" viewBox="0 0 22 22"><path d="M3 7 V3 H7 M15 3 H19 V7 M19 15 V19 H15 M7 19 H3 V15" stroke="#e0e0e0" stroke-width="1.6" fill="none"/><circle cx="11" cy="11" r="3.2" fill="none" stroke="#8ab0e0" stroke-width="1.6"/><circle cx="11" cy="11" r="1" fill="#e0e0e0"/></svg>
<svg class="r" style="left:566px;top:895px;" width="10" height="20" viewBox="0 0 10 20"><path d="M1.5 8 L5 2.5 L8.5 8 Z M1.5 12 L5 17.5 L8.5 12 Z" fill="#767b80"/></svg>
<div class="r" style="left:580px;top:892px;width:1px;height:26px;background:#1b1c1e;"></div>
<svg class="r" style="left:584px;top:894px;" width="22" height="22" viewBox="0 0 22 22"><path d="M5 5 H17" stroke="#8ab0e0" stroke-width="2" stroke-dasharray="2 2"/><path d="M2 13 H20 M2 13 L6 9 M2 13 L6 17 M20 13 L16 9 M20 13 L16 17" stroke="#f0f0f0" stroke-width="1.8" fill="none"/></svg>
<div class="r" style="left:617px;top:891px;width:113px;height:28px;background:#27292c;border:1px solid #1c1d1f;border-radius:5px;"></div>
<div class="r" style="left:618px;top:892px;width:52px;height:26px;background:#5b7fb5;border-radius:4px 0 0 4px"></div>
<div class="r" style="left:643px;top:892px;width:1px;height:26px;background:#3f5f8f;"></div>
<svg class="r" style="left:620px;top:894px;" width="22" height="22" viewBox="0 0 22 22"><path d="M11 13 V3" stroke="#3a7a3a" stroke-width="2.2"/><path d="M11 13 L3 19" stroke="#c03030" stroke-width="2.2"/><path d="M11 13 L19 19" stroke="#3050b0" stroke-width="2.2"/><circle cx="11" cy="13" r="1.5" fill="#eee"/></svg>
<svg class="r" style="left:646px;top:894px;" width="22" height="22" viewBox="0 0 22 22"><path d="M4 18 L17 5 M17 5 H10 M17 5 V12" stroke="#1a2a40" stroke-width="3.4" fill="none"/><path d="M4 18 L17 5 M17 5 H10 M17 5 V12" stroke="#9cc8f8" stroke-width="1.8" fill="none"/></svg>
<svg class="r" style="left:673px;top:894px;" width="22" height="22" viewBox="0 0 22 22"><path d="M5 19 Q7 7 19 5" stroke="#4e7ab0" stroke-width="2.2" fill="none"/></svg>
<div class="r" style="left:698px;top:892px;width:1px;height:26px;background:#1b1c1e;"></div>
<svg class="r" style="left:701px;top:894px;" width="22" height="22" viewBox="0 0 22 22"><path d="M4 19 L14 9" stroke="#4e7ab0" stroke-width="2.2"/><rect x="12" y="4" width="6" height="6" fill="#4e7ab0"/></svg>
<div class="r" style="left:720px;top:891px;width:108px;height:28px;background:#27292c;border:1px solid #1c1d1f;border-radius:5px;"></div>
<div class="t" style="left:738px;top:899.46px;font-size:16px;color:#dcdcdc;">Global</div>
<svg class="r" style="left:813px;top:895px;" width="10" height="20" viewBox="0 0 10 20"><path d="M1.5 8 L5 2.5 L8.5 8 Z M1.5 12 L5 17.5 L8.5 12 Z" fill="#767b80"/></svg>
<div class="r" style="left:836px;top:891px;width:70px;height:28px;background:#2a2c2f;border:1px solid #1c1d1f;border-radius:5px;"></div>
<div class="r" style="left:837.0px;top:892px;width:13px;height:12.5px;background:#5b7fb5;border:1px solid #3f5f8f"></div>
<div class="r" style="left:850.6px;top:892px;width:13px;height:12.5px;background:#5b7fb5;border:1px solid #3f5f8f"></div>
<div class="r" style="left:864.2px;top:892px;width:13px;height:12.5px;background:#5b7fb5;border:1px solid #3f5f8f"></div>
<div class="r" style="left:877.8px;top:892px;width:13px;height:12.5px;background:#5b7fb5;border:1px solid #3f5f8f"></div>
<div class="r" style="left:891.4px;top:892px;width:13px;height:12.5px;background:#5b7fb5;border:1px solid #3f5f8f"></div>
<div class="r" style="left:837.0px;top:905px;width:13px;height:12.5px;background:#5b7fb5;border:1px solid #1c1d1f"></div>
<div class="r" style="left:850.6px;top:905px;width:13px;height:12.5px;background:#5b7fb5;border:1px solid #1c1d1f"></div>
<div class="r" style="left:864.2px;top:905px;width:13px;height:12.5px;background:#27292c;border:1px solid #1c1d1f"></div>
<div class="r" style="left:877.8px;top:905px;width:13px;height:12.5px;background:#27292c;border:1px solid #1c1d1f"></div>
<div class="r" style="left:891.4px;top:905px;width:13px;height:12.5px;background:#27292c;border:1px solid #1c1d1f"></div>
<svg class="r" style="left:836px;top:891px;" width="70" height="28" viewBox="0 0 70 28"><circle cx="7.5" cy="7.5" r="3.2" fill="none" stroke="#1a2a44" stroke-width="1.2"/><circle cx="21.1" cy="7.5" r="3.2" fill="none" stroke="#1a2a44" stroke-width="1.2"/><circle cx="34.7" cy="7.5" r="3.2" fill="none" stroke="#1a2a44" stroke-width="1.2"/><circle cx="48.3" cy="7.5" r="3.2" fill="none" stroke="#1a2a44" stroke-width="1.2"/><circle cx="61.9" cy="7.5" r="3.2" fill="none" stroke="#1a2a44" stroke-width="1.2"/><circle cx="7.5" cy="7.5" r="2.2" fill="#e89a5a"/><circle cx="7.5" cy="20" r="3.2" fill="none" stroke="#1a2a44" stroke-width="1.2"/><circle cx="21.1" cy="20" r="3.2" fill="none" stroke="#1a2a44" stroke-width="1.2"/><circle cx="34.7" cy="20" r="3.2" fill="none" stroke="#1a2a44" stroke-width="1.2"/></svg>
<div class="r" style="left:912px;top:891px;width:70px;height:28px;background:#2a2c2f;border:1px solid #1c1d1f;border-radius:5px;"></div>
<div class="r" style="left:913.0px;top:892px;width:13px;height:12.5px;background:#27292c;border:1px solid #1c1d1f"></div>
<div class="r" style="left:926.6px;top:892px;width:13px;height:12.5px;background:#27292c;border:1px solid #1c1d1f"></div>
<div class="r" style="left:940.2px;top:892px;width:13px;height:12.5px;background:#27292c;border:1px solid #1c1d1f"></div>
<div class="r" style="left:953.8px;top:892px;width:13px;height:12.5px;background:#27292c;border:1px solid #1c1d1f"></div>
<div class="r" style="left:967.4px;top:892px;width:13px;height:12.5px;background:#27292c;border:1px solid #1c1d1f"></div>
<div class="r" style="left:913.0px;top:905px;width:13px;height:12.5px;background:#27292c;border:1px solid #1c1d1f"></div>
<div class="r" style="left:926.6px;top:905px;width:13px;height:12.5px;background:#27292c;border:1px solid #1c1d1f"></div>
<div class="r" style="left:940.2px;top:905px;width:13px;height:12.5px;background:#27292c;border:1px solid #1c1d1f"></div>
<div class="r" style="left:953.8px;top:905px;width:13px;height:12.5px;background:#27292c;border:1px solid #1c1d1f"></div>
<div class="r" style="left:967.4px;top:905px;width:13px;height:12.5px;background:#27292c;border:1px solid #1c1d1f"></div>
<svg class="r" style="left:912px;top:891px;" width="70" height="28" viewBox="0 0 70 28"><circle cx="48" cy="7.5" r="3" fill="none" stroke="#555" stroke-width="1.2"/><circle cx="62" cy="7.5" r="3" fill="none" stroke="#555" stroke-width="1.2"/><circle cx="62" cy="20" r="3" fill="none" stroke="#555" stroke-width="1.2"/></svg>
<div class="r" style="left:989px;top:891px;width:27px;height:28px;background:#5b7fb5;border:1px solid #3f5f8f;border-radius:5px;"></div>
<svg class="r" style="left:991px;top:894px;" width="22" height="22" viewBox="0 0 22 22"><rect x="4" y="4" width="12" height="12" fill="#cfd8e4" stroke="#223" stroke-width="1"/><path d="M14 12 a3 3 0 0 1 6 0 v4 a3 3 0 0 1 -6 0 Z" fill="none" stroke="#fff" stroke-width="1.6"/></svg>
<div class="r" style="left:1021px;top:891px;width:29px;height:28px;background:#27292c;border:1px solid #1c1d1f;border-radius:5px;"></div>
<svg class="r" style="left:1024px;top:894px;" width="22" height="22" viewBox="0 0 22 22"><circle cx="11" cy="11" r="6.5" fill="none" stroke="#777" stroke-width="2"/><circle cx="11" cy="11" r="3" fill="#666"/></svg>
<div class="r" style="left:1056px;top:891px;width:100px;height:28px;background:#27292c;border:1px solid #1c1d1f;border-radius:5px;"></div>
<svg class="r" style="left:1058px;top:894px;" width="22" height="22" viewBox="0 0 22 22"><path d="M6 12 V8 a5 5 0 0 1 10 0 V13" stroke="#999" stroke-width="2.4" fill="none" transform="rotate(40 11 11)"/></svg>
<div class="r" style="left:1083px;top:892px;width:1px;height:26px;background:#1b1c1e;"></div>
<svg class="r" style="left:1086px;top:894px;" width="24" height="22" viewBox="0 0 24 22"><path d="M2 11 H22 M4 6 V16 M20 6 V16 M9 5 V17 M15 5 V17 M12 7 V15" stroke="#ccd" stroke-width="1.5"/><path d="M12 7 V15" stroke="#8ab0e0" stroke-width="2.5"/></svg>
<svg class="r" style="left:1112px;top:895px;" width="10" height="20" viewBox="0 0 10 20"><path d="M1.5 8 L5 2.5 L8.5 8 Z M1.5 12 L5 17.5 L8.5 12 Z" fill="#767b80"/></svg>
<div class="r" style="left:1125px;top:892px;width:1px;height:26px;background:#1b1c1e;"></div>
<svg class="r" style="left:1130px;top:894px;" width="22" height="22" viewBox="0 0 22 22"><path d="M2 14 H20 M2 19 H20 M8 4 V21 M15 4 V21" stroke="#ddd" stroke-width="1.4"/><circle cx="10" cy="8" r="4" fill="#8ab0e0" stroke="#fff" stroke-width="1"/></svg>
<div class="r" style="left:1161px;top:891px;width:57px;height:28px;background:#27292c;border:1px solid #1c1d1f;border-radius:5px;"></div>
<svg class="r" style="left:1164px;top:894px;" width="22" height="22" viewBox="0 0 22 22"><rect x="2" y="7" width="17" height="12" rx="1" fill="#d8d8d8" stroke="#333" stroke-width="1"/><circle cx="10" cy="13" r="4" fill="#333"/><circle cx="10" cy="13" r="2.5" fill="#c33"/><circle cx="17" cy="5" r="3" fill="#f0e060"/></svg>
<div class="r" style="left:1189px;top:892px;width:1px;height:26px;background:#1b1c1e;"></div>
<svg class="r" style="left:1192px;top:894px;" width="22" height="22" viewBox="0 0 22 22"><rect x="2" y="11" width="17" height="9" fill="#ddd" stroke="#333" stroke-width="1"/><path d="M2 9 L18 4" stroke="#ddd" stroke-width="3" stroke-dasharray="3 2"/></svg>
<div class="t" style="left:1234px;top:899.46px;font-size:16px;color:#dcdcdc;">Selection</div>
<div class="r" style="left:0px;top:923px;width:1485px;height:33px;background:#303235;"></div>
<div class="r" style="left:256px;top:923px;width:1084px;height:33px;background:#3b3e40;"></div>
<div class="r" style="left:34px;top:923px;width:1px;height:33px;background:#232426;"></div>
<div class="r" style="left:78px;top:923px;width:1px;height:33px;background:#232426;"></div>
<div class="r" style="left:121px;top:923px;width:1px;height:33px;background:#232426;"></div>
<div class="r" style="left:165px;top:923px;width:1px;height:33px;background:#232426;"></div>
<div class="r" style="left:208px;top:923px;width:1px;height:33px;background:#232426;"></div>
<div class="r" style="left:252px;top:923px;width:1px;height:33px;background:#232426;"></div>
<div class="r" style="left:296px;top:923px;width:1px;height:33px;background:#232426;"></div>
<div class="r" style="left:339px;top:923px;width:1px;height:33px;background:#232426;"></div>
<div class="r" style="left:383px;top:923px;width:1px;height:33px;background:#232426;"></div>
<div class="r" style="left:426px;top:923px;width:1px;height:33px;background:#232426;"></div>
<div class="r" style="left:470px;top:923px;width:1px;height:33px;background:#232426;"></div>
<div class="r" style="left:513px;top:923px;width:1px;height:33px;background:#232426;"></div>
<div class="r" style="left:557px;top:923px;width:1px;height:33px;background:#232426;"></div>
<div class="r" style="left:600px;top:923px;width:1px;height:33px;background:#232426;"></div>
<div class="r" style="left:644px;top:923px;width:1px;height:33px;background:#232426;"></div>
<div class="r" style="left:687px;top:923px;width:1px;height:33px;background:#232426;"></div>
<div class="r" style="left:731px;top:923px;width:1px;height:33px;background:#232426;"></div>
<div class="r" style="left:774px;top:923px;width:1px;height:33px;background:#232426;"></div>
<div class="r" style="left:818px;top:923px;width:1px;height:33px;background:#232426;"></div>
<div class="r" style="left:861px;top:923px;width:1px;height:33px;background:#232426;"></div>
<div class="r" style="left:905px;top:923px;width:1px;height:33px;background:#232426;"></div>
<div class="r" style="left:948px;top:923px;width:1px;height:33px;background:#232426;"></div>
<div class="r" style="left:992px;top:923px;width:1px;height:33px;background:#232426;"></div>
<div class="r" style="left:1035px;top:923px;width:1px;height:33px;background:#232426;"></div>
<div class="r" style="left:1079px;top:923px;width:1px;height:33px;background:#232426;"></div>
<div class="r" style="left:1122px;top:923px;width:1px;height:33px;background:#232426;"></div>
<div class="r" style="left:1166px;top:923px;width:1px;height:33px;background:#232426;"></div>
<div class="r" style="left:1209px;top:923px;width:1px;height:33px;background:#232426;"></div>
<div class="r" style="left:1253px;top:923px;width:1px;height:33px;background:#232426;"></div>
<div class="r" style="left:1296px;top:923px;width:1px;height:33px;background:#232426;"></div>
<div class="r" style="left:1340px;top:923px;width:1px;height:33px;background:#232426;"></div>
<div class="r" style="left:1383px;top:923px;width:1px;height:33px;background:#232426;"></div>
<div class="r" style="left:1427px;top:923px;width:1px;height:33px;background:#232426;"></div>
<div class="r" style="left:1470px;top:923px;width:1px;height:33px;background:#232426;"></div>
<div class="r" style="left:255px;top:923px;width:2px;height:33px;background:#6a8cc4;"></div>
<div class="r" style="left:0px;top:956px;width:1485px;height:25px;background:#4b4e52;"></div>
<div class="r" style="left:5px;top:957px;width:1474px;height:18px;background:#6a6e73;border:1px solid #1a1b1d;border-radius:9px"></div>
<svg class="r" style="left:4px;top:958px;" width="16" height="16" viewBox="0 0 16 16"><circle cx="8" cy="8" r="6" fill="#50545a"/></svg>
<svg class="r" style="left:1462px;top:958px;" width="16" height="16" viewBox="0 0 16 16"><circle cx="8" cy="8" r="6" fill="#50545a"/></svg>
<div class="t" style="left:-17.420000000000016px;width:200px;text-align:center;top:960.30px;font-size:15px;color:#0e0e0e;">-40</div>
<div class="t" style="left:69.03999999999999px;width:200px;text-align:center;top:960.30px;font-size:15px;color:#0e0e0e;">-20</div>
<div class="t" style="left:155.5px;width:200px;text-align:center;top:960.30px;font-size:15px;color:#0e0e0e;">0</div>
<div class="t" style="left:241.96000000000004px;width:200px;text-align:center;top:960.30px;font-size:15px;color:#0e0e0e;">20</div>
<div class="t" style="left:328.42px;width:200px;text-align:center;top:960.30px;font-size:15px;color:#0e0e0e;">40</div>
<div class="t" style="left:414.88px;width:200px;text-align:center;top:960.30px;font-size:15px;color:#0e0e0e;">60</div>
<div class="t" style="left:501.34000000000003px;width:200px;text-align:center;top:960.30px;font-size:15px;color:#0e0e0e;">80</div>
<div class="t" style="left:587.8000000000001px;width:200px;text-align:center;top:960.30px;font-size:15px;color:#0e0e0e;">100</div>
<div class="t" style="left:674.26px;width:200px;text-align:center;top:960.30px;font-size:15px;color:#0e0e0e;">120</div>
<div class="t" style="left:760.72px;width:200px;text-align:center;top:960.30px;font-size:15px;color:#0e0e0e;">140</div>
<div class="t" style="left:847.1800000000001px;width:200px;text-align:center;top:960.30px;font-size:15px;color:#0e0e0e;">160</div>
<div class="t" style="left:933.6400000000001px;width:200px;text-align:center;top:960.30px;font-size:15px;color:#0e0e0e;">180</div>
<div class="t" style="left:1020.1000000000001px;width:200px;text-align:center;top:960.30px;font-size:15px;color:#0e0e0e;">200</div>
<div class="t" style="left:1106.56px;width:200px;text-align:center;top:960.30px;font-size:15px;color:#0e0e0e;">220</div>
<div class="t" style="left:1193.02px;width:200px;text-align:center;top:960.30px;font-size:15px;color:#0e0e0e;">240</div>
<div class="t" style="left:1279.48px;width:200px;text-align:center;top:960.30px;font-size:15px;color:#0e0e0e;">260</div>
<svg class="r" style="left:1467px;top:924px;" width="16" height="16" viewBox="0 0 16 16"><path d="M0 0 L16 16 M5 0 L16 11 M10 0 L16 6" stroke="#9a9a9a" stroke-width="1" fill="none" opacity="0.8"/></svg>
<div class="r" style="left:0px;top:980px;width:1485px;height:1px;background:#1d1e20;"></div>
<div class="r" style="left:0px;top:981px;width:1485px;height:33px;background:#393c3f;"></div>
<div class="r" style="left:12px;top:984px;width:44px;height:28px;background:#27292c;border:1px solid #1c1d1f;border-radius:5px;"></div>
<svg class="r" style="left:17px;top:987px;" width="22" height="22" viewBox="0 0 22 22"><circle cx="11" cy="11" r="8.5" fill="#e6e6e6" stroke="#555" stroke-width="1"/><path d="M13 6 L8 11 L12 15" stroke="#c02020" stroke-width="1.8" fill="none"/></svg>
<svg class="r" style="left:43px;top:988px;" width="10" height="20" viewBox="0 0 10 20"><path d="M1.5 8 L5 2.5 L8.5 8 Z M1.5 12 L5 17.5 L8.5 12 Z" fill="#767b80"/></svg>
<div class="t" style="left:72px;top:992.46px;font-size:16px;color:#dcdcdc;">View</div>
<div class="t" style="left:134px;top:992.46px;font-size:16px;color:#dcdcdc;">Marker</div>
<div class="t" style="left:211px;top:992.46px;font-size:16px;color:#dcdcdc;">Frame</div>
<div class="t" style="left:283px;top:992.46px;font-size:16px;color:#dcdcdc;">Playback</div>
<div class="r" style="left:364px;top:984px;width:56px;height:28px;background:#27292c;border:1px solid #1c1d1f;border-radius:5px;"></div>
<svg class="r" style="left:367px;top:987px;" width="22" height="22" viewBox="0 0 22 22"><circle cx="11" cy="11" r="8" fill="#f0f0f0" stroke="#444" stroke-width="1"/><path d="M11 11 V3 A8 8 0 0 1 18 14 Z" fill="#e89a3a"/><path d="M11 11 L16 15" stroke="#c33" stroke-width="1.5"/></svg>
<div class="r" style="left:392px;top:985px;width:1px;height:26px;background:#1b1c1e;"></div>
<svg class="r" style="left:396px;top:987px;" width="22" height="22" viewBox="0 0 22 22"><path d="M7 10 V7 a4 4 0 0 1 8 0 V10" stroke="#ddd" stroke-width="2" fill="none"/><rect x="5" y="10" width="12" height="9" fill="#ddd"/><rect x="10" y="13" width="2" height="3" fill="#444"/></svg>
<div class="r" style="left:427px;top:984px;width:321px;height:29px;background:#868c93;border:1px solid #1f2022;border-radius:12px"></div>
<div class="r" style="left:590px;top:985px;width:1px;height:27px;background:#3a3c3f;"></div>
<div class="t" style="left:448px;top:992.46px;font-size:16px;color:#111;">Start:</div>
<div class="t" style="right:1352px;top:992.46px;font-size:16px;color:#111;">1</div>
<div class="t" style="left:612px;top:992.46px;font-size:16px;color:#111;">End:</div>
<div class="t" style="right:1193px;top:992.46px;font-size:16px;color:#111;">250</div>
<svg class="r" style="left:433px;top:990px;" width="10" height="16" viewBox="0 0 10 16"><path d="M7 4 L3 8 L7 12 Z" fill="#7d8288"/></svg>
<svg class="r" style="left:576px;top:990px;" width="10" height="16" viewBox="0 0 10 16"><path d="M3 4 L7 8 L3 12 Z" fill="#7d8288"/></svg>
<svg class="r" style="left:596px;top:990px;" width="10" height="16" viewBox="0 0 10 16"><path d="M7 4 L3 8 L7 12 Z" fill="#7d8288"/></svg>
<svg class="r" style="left:737px;top:990px;" width="10" height="16" viewBox="0 0 10 16"><path d="M3 4 L7 8 L3 12 Z" fill="#7d8288"/></svg>
<div class="r" style="left:756px;top:984px;width:124px;height:29px;background:#868c93;border:1px solid #1f2022;border-radius:12px"></div>
<div class="t" style="right:1060px;top:992.46px;font-size:16px;color:#111;">1</div>
<svg class="r" style="left:762px;top:990px;" width="10" height="16" viewBox="0 0 10 16"><path d="M7 4 L3 8 L7 12 Z" fill="#7d8288"/></svg>
<svg class="r" style="left:866px;top:990px;" width="10" height="16" viewBox="0 0 10 16"><path d="M3 4 L7 8 L3 12 Z" fill="#7d8288"/></svg>
<div class="r" style="left:901px;top:984px;width:168px;height:28px;background:#27292c;border:1px solid #1c1d1f;border-radius:5px;"></div>
<svg class="r" style="left:904px;top:987px;" width="22" height="22" viewBox="0 0 22 22"><path d="M4 5 V17" stroke="#eee" stroke-width="2.4"/><path d="M13 5 L6 11 L13 17 Z M20 5 L13 11 L20 17 Z" fill="#eee"/></svg>
<div class="r" style="left:929px;top:985px;width:1px;height:26px;background:#1b1c1e;"></div>
<svg class="r" style="left:932px;top:987px;" width="22" height="22" viewBox="0 0 22 22"><path d="M11 5 L4 11 L11 17 Z M18 5 L11 11 L18 17 Z" fill="#eee"/></svg>
<div class="r" style="left:957px;top:985px;width:1px;height:26px;background:#1b1c1e;"></div>
<svg class="r" style="left:960px;top:987px;" width="22" height="22" viewBox="0 0 22 22"><path d="M16 3 L6 11 L16 19 Z" fill="#eee"/></svg>
<div class="r" style="left:985px;top:985px;width:1px;height:26px;background:#1b1c1e;"></div>
<svg class="r" style="left:988px;top:987px;" width="22" height="22" viewBox="0 0 22 22"><path d="M6 3 L16 11 L6 19 Z" fill="#eee"/></svg>
<div class="r" style="left:1013px;top:985px;width:1px;height:26px;background:#1b1c1e;"></div>
<svg class="r" style="left:1016px;top:987px;" width="22" height="22" viewBox="0 0 22 22"><path d="M4 5 L11 11 L4 17 Z M11 5 L18 11 L11 17 Z" fill="#eee"/></svg>
<div class="r" style="left:1041px;top:985px;width:1px;height:26px;background:#1b1c1e;"></div>
<svg class="r" style="left:1044px;top:987px;" width="22" height="22" viewBox="0 0 22 22"><path d="M18 5 V17" stroke="#eee" stroke-width="2.4"/><path d="M2 5 L9 11 L2 17 Z M9 5 L16 11 L9 17 Z" fill="#eee"/></svg>
<div class="r" style="left:1075px;top:984px;width:164px;height:28px;background:#27292c;border:1px solid #1c1d1f;border-radius:5px;"></div>
<div class="t" style="left:1086px;top:992.46px;font-size:16px;color:#dcdcdc;">No Sync</div>
<svg class="r" style="left:1225px;top:988px;" width="10" height="20" viewBox="0 0 10 20"><path d="M1.5 8 L5 2.5 L8.5 8 Z M1.5 12 L5 17.5 L8.5 12 Z" fill="#767b80"/></svg>
<div class="r" style="left:1259px;top:984px;width:28px;height:28px;background:#27292c;border:1px solid #1c1d1f;border-radius:5px;"></div>
<svg class="r" style="left:1262px;top:987px;" width="22" height="22" viewBox="0 0 22 22"><circle cx="11" cy="11" r="6" fill="#e03a1a" stroke="#5a1a10" stroke-width="1"/></svg>
<div class="r" style="left:1293px;top:984px;width:45px;height:28px;background:#27292c;border:1px solid #1c1d1f;border-radius:5px;"></div>
<svg class="r" style="left:1298px;top:988px;" width="20" height="20" viewBox="0 0 20 20"><path d="M10 4 L16 10 L10 16 L4 10 Z" fill="#f0a030"/></svg>
<svg class="r" style="left:1323px;top:988px;" width="10" height="20" viewBox="0 0 10 20"><path d="M1.5 8 L5 2.5 L8.5 8 Z M1.5 12 L5 17.5 L8.5 12 Z" fill="#767b80"/></svg>
<div class="r" style="left:1343px;top:985px;width:142px;height:27px;background:#868c93;border:1px solid #2a2c2e;border-radius:9px 0 0 9px"></div>
<svg class="r" style="left:1345px;top:985px;" width="30" height="28" viewBox="0 0 30 28"><g stroke="#1c1c1c" stroke-width="3.2" fill="none"><circle cx="8.5" cy="17.5" r="3.5"/><path d="M9 14 V4 H12 V7"/><circle cx="14" cy="20" r="3"/><path d="M16 18 L24 11"/><circle cx="24" cy="10" r="2.5"/></g><g stroke="#f2e6b0" stroke-width="1.6" fill="none"><circle cx="8.5" cy="17.5" r="3.5"/><path d="M9 14 V4 H12 V7"/><circle cx="14" cy="20" r="3"/><path d="M16 18 L24 11"/><circle cx="24" cy="10" r="2.5"/></g></svg>
<div class="r" style="left:1485px;top:36px;width:435px;height:37px;background:#393c3f;"></div>
<div class="r" style="left:1485px;top:72px;width:435px;height:1px;background:#2a2c2f;"></div>
<div class="r" style="left:1497px;top:40px;width:44px;height:28px;background:#27292c;border:1px solid #1c1d1f;border-radius:5px;"></div>
<svg class="r" style="left:1502px;top:44px;" width="22" height="20" viewBox="0 0 22 20"><rect x="2" y="2" width="7" height="3" fill="#f0c080"/><path d="M4 5 V16 H8 M4 10 H8" stroke="#ccc" stroke-width="1" fill="none"/><rect x="8" y="8.5" width="9" height="3" fill="#eee"/><rect x="8" y="14.5" width="9" height="3" fill="#eee"/></svg>
<svg class="r" style="left:1526px;top:44px;" width="10" height="20" viewBox="0 0 10 20"><path d="M1.5 8 L5 2.5 L8.5 8 Z M1.5 12 L5 17.5 L8.5 12 Z" fill="#767b80"/></svg>
<div class="t" style="left:1557px;top:48.46px;font-size:16px;color:#dcdcdc;">View</div>
<div class="t" style="left:1619px;top:48.46px;font-size:16px;color:#dcdcdc;">Search</div>
<div class="r" style="left:1686px;top:40px;width:172px;height:28px;background:#27292c;border:1px solid #1c1d1f;border-radius:5px;"></div>
<div class="t" style="left:1697px;top:48.46px;font-size:16px;color:#dcdcdc;">All Scenes</div>
<svg class="r" style="left:1843px;top:44px;" width="10" height="20" viewBox="0 0 10 20"><path d="M1.5 8 L5 2.5 L8.5 8 Z M1.5 12 L5 17.5 L8.5 12 Z" fill="#767b80"/></svg>
<div class="r" style="left:1864px;top:40px;width:60px;height:28px;background:#80868e;border:1px solid #1c1d1f;border-radius:5px 0 0 5px"></div>
<svg class="r" style="left:1868px;top:42px;" width="24" height="24" viewBox="0 0 24 24"><circle cx="14" cy="9" r="6" fill="#dde4ee" stroke="#333" stroke-width="1.6"/><path d="M10 13 L3 20" stroke="#c06a30" stroke-width="3"/></svg>
<svg class="r" style="left:1902px;top:38px;" width="16" height="16" viewBox="0 0 16 16"><path d="M0 0 L16 16 M5 0 L16 11 M10 0 L16 6" stroke="#9a9a9a" stroke-width="1" fill="none" opacity="0.8"/></svg>
<div class="r" style="left:1485px;top:73px;width:435px;height:28px;background:#393c3f;"></div>
<div class="r" style="left:1485px;top:101px;width:435px;height:28px;background:#3e4144;"></div>
<div class="r" style="left:1485px;top:129px;width:435px;height:28px;background:#393c3f;"></div>
<div class="r" style="left:1485px;top:157px;width:435px;height:28px;background:#3e4144;"></div>
<div class="r" style="left:1485px;top:185px;width:435px;height:13px;background:#393c3f;"></div>
<div class="r" style="left:1812px;top:73px;width:1px;height:125px;background:#323538;"></div>
<div class="r" style="left:1841px;top:73px;width:1px;height:125px;background:#323538;"></div>
<div class="r" style="left:1869px;top:73px;width:1px;height:125px;background:#323538;"></div>
<div class="r" style="left:1503px;top:88px;width:24px;height:1px;background:#8a8a8a;"></div>
<div class="r" style="left:1527px;top:98px;width:1px;height:100px;background:#8a8a8a;"></div>
<div class="r" style="left:1527px;top:172px;width:18px;height:1px;background:#8a8a8a;"></div>
<svg class="r" style="left:1492px;top:81px;" width="14" height="14" viewBox="0 0 14 14"><circle cx="7" cy="7" r="5.5" fill="#eee" stroke="#222" stroke-width="1"/><path d="M4 7 H10" stroke="#222" stroke-width="1.6"/></svg>
<svg class="r" style="left:1520px;top:109px;" width="14" height="14" viewBox="0 0 14 14"><circle cx="7" cy="7" r="5.5" fill="#ccc" stroke="#222" stroke-width="1"/><path d="M4 7 H10 M7 4 V10" stroke="#222" stroke-width="1.6"/></svg>
<svg class="r" style="left:1520px;top:165px;" width="14" height="14" viewBox="0 0 14 14"><circle cx="7" cy="7" r="5.5" fill="#ccc" stroke="#222" stroke-width="1"/><path d="M4 7 H10 M7 4 V10" stroke="#222" stroke-width="1.6"/></svg>
<svg class="r" style="left:1514px;top:76px;" width="26" height="26" viewBox="0 0 26 26"><circle cx="13" cy="13" r="12" fill="#6a6e73"/><circle cx="8" cy="8" r="3" fill="#e0e080"/><rect x="14" y="5" width="7" height="11" rx="2" fill="#6f9ad0"/><circle cx="11" cy="17" r="5" fill="#eee"/></svg>
<div class="t" style="left:1544px;top:82.46px;font-size:16px;color:#dcdcdc;">Scene</div>
<svg class="r" style="left:1544px;top:104px;" width="24" height="24" viewBox="0 0 24 24"><rect x="6" y="7" width="15" height="14" fill="#e8dcb0" stroke="#333" stroke-width="1"/><rect x="3" y="3" width="14" height="14" fill="#e0e6f0" stroke="#333" stroke-width="1"/><path d="M8 14 a2 2 0 1 0 3 0 V6 H13" stroke="#3a6ab0" stroke-width="2" fill="none"/></svg>
<div class="t" style="left:1572px;top:110.46px;font-size:16px;color:#dcdcdc;">RenderLayers</div>
<div class="r" style="left:1685px;top:106px;width:2px;height:18px;background:#111;"></div>
<svg class="r" style="left:1700px;top:103px;" width="26" height="26" viewBox="0 0 26 26"><circle cx="13" cy="13" r="12" fill="#6a6e73"/><rect x="8" y="8" width="13" height="12" fill="#e8dcb0" stroke="#333" stroke-width="1"/><rect x="5" y="5" width="12" height="12" fill="#e0e6f0" stroke="#333" stroke-width="1"/><path d="M9 13 a2 2 0 1 0 3 0 V7 H14" stroke="#3a6ab0" stroke-width="2" fill="none"/></svg>
<svg class="r" style="left:1543px;top:131px;" width="26" height="26" viewBox="0 0 26 26"><circle cx="13" cy="13" r="12" fill="#6a6e73"/><circle cx="13" cy="13" r="8.5" fill="#4a8a9a"/><path d="M8 9 q4 -3 6 1 q2 4 -2 6 q-3 -1 -4 -7 Z M15 14 q3 -1 4 2 q-2 3 -4 2 Z" fill="#5aa04a"/></svg>
<div class="t" style="left:1572px;top:138.46px;font-size:16px;color:#dcdcdc;">World</div>
<svg class="r" style="left:1546px;top:159px;" width="22" height="24" viewBox="0 0 22 24"><circle cx="10" cy="8" r="6" fill="#f0b060" stroke="#6a4a20" stroke-width="1"/><rect x="7" y="14" width="6" height="6" fill="#bbb" stroke="#444" stroke-width="1"/></svg>
<div class="t" style="left:1572px;top:166.46px;font-size:16px;color:#dcdcdc;">Area</div>
<div class="r" style="left:1621px;top:162px;width:2px;height:18px;background:#111;"></div>
<svg class="r" style="left:1636px;top:160px;" width="24" height="24" viewBox="0 0 24 24"><path d="M4 4 L20 20 M4 4 H10 M4 4 V10 M20 4 L4 20 M20 4 H14 M20 4 V10 M4 20 H10 M20 20 V14" stroke="#8a8a6a" stroke-width="2" fill="none"/></svg>
<svg class="r" style="left:1814px;top:162px;" width="26" height="20" viewBox="0 0 26 20"><path d="M2 10 Q13 0 24 10 Q13 20 2 10 Z" fill="#f0f0f0"/><circle cx="13" cy="10" r="4" fill="#666"/><circle cx="13" cy="10" r="1.6" fill="#222"/></svg>
<svg class="r" style="left:1846px;top:160px;" width="20" height="24" viewBox="0 0 20 24"><path d="M4 3 L4 19 L8 15 L11 21 L13 20 L10 14 L15 14 Z" fill="#f0f0f0" stroke="#222" stroke-width="1"/></svg>
<svg class="r" style="left:1871px;top:161px;" width="22" height="22" viewBox="0 0 22 22"><rect x="2" y="5" width="17" height="13" fill="#ddd" stroke="#333" stroke-width="1"/><circle cx="10.5" cy="12" r="4" fill="#333"/><circle cx="10.5" cy="12" r="2.2" fill="#c44"/></svg>
<svg class="r" style="left:1546px;top:187px;" width="22" height="11" viewBox="0 0 22 11"><circle cx="10" cy="8" r="6" fill="#f0b060"/></svg>
<div class="t" style="left:1572px;top:194.46px;font-size:16px;color:#dcdcdc;clip-path:inset(0 0 12px 0)">Area.001</div>
<div class="r" style="left:1652px;top:190px;width:2px;height:8px;background:#111;"></div>
<svg class="r" style="left:1814px;top:190px;" width="26" height="8" viewBox="0 0 26 8"><path d="M2 10 Q13 0 24 10 Z" fill="#f0f0f0"/></svg>
<svg class="r" style="left:1871px;top:190px;" width="22" height="8" viewBox="0 0 22 8"><rect x="2" y="5" width="17" height="13" fill="#ddd"/></svg>
<div class="r" style="left:1520px;top:194px;width:14px;height:4px;background:#ccc;border-radius:7px 7px 0 0"></div>
<div class="r" style="left:1896px;top:78px;width:19px;height:116px;background:#36393c;border:1px solid #2b2d30;border-radius:9px"></div>
<div class="r" style="left:1897px;top:79px;width:17px;height:16px;background:#5f6266;border-radius:8px"></div>
<div class="r" style="left:1485px;top:197px;width:435px;height:1px;background:#1d1e20;"></div>
<svg class="r" style="left:1486px;top:182px;" width="16" height="16" viewBox="0 0 16 16"><path d="M0 0 L16 16 M0 5 L11 16 M0 10 L6 16" stroke="#9a9a9a" stroke-width="1" fill="none" opacity="0.8"/></svg>
<div class="r" style="left:1485px;top:198px;width:435px;height:38px;background:#393c3f;"></div>
<div class="r" style="left:1485px;top:235px;width:435px;height:1px;background:#2a2c2f;"></div>
<div class="r" style="left:1485px;top:236px;width:435px;height:778px;background:#393c3f;"></div>
<div class="r" style="left:1497px;top:203px;width:44px;height:28px;background:#27292c;border:1px solid #1c1d1f;border-radius:5px;"></div>
<svg class="r" style="left:1501px;top:206px;" width="24" height="22" viewBox="0 0 24 22"><rect x="2" y="4" width="16" height="6" rx="3" fill="#bbb"/><rect x="2" y="12" width="16" height="6" rx="3" fill="#f0f0f0" stroke="#333" stroke-width="1"/></svg>
<svg class="r" style="left:1527px;top:207px;" width="10" height="20" viewBox="0 0 10 20"><path d="M1.5 8 L5 2.5 L8.5 8 Z M1.5 12 L5 17.5 L8.5 12 Z" fill="#767b80"/></svg>
<div class="r" style="left:1552px;top:203px;width:252px;height:28px;background:#27292c;border:1px solid #1c1d1f;border-radius:5px;"></div>
<div class="r" style="left:1553px;top:204px;width:27px;height:26px;background:#5b7fb5;border-radius:4px 0 0 4px"></div>
<div class="r" style="left:1580px;top:204px;width:1px;height:26px;background:#1b1c1e;"></div>
<div class="r" style="left:1608px;top:204px;width:1px;height:26px;background:#1b1c1e;"></div>
<div class="r" style="left:1636px;top:204px;width:1px;height:26px;background:#1b1c1e;"></div>
<div class="r" style="left:1664px;top:204px;width:1px;height:26px;background:#1b1c1e;"></div>
<div class="r" style="left:1692px;top:204px;width:1px;height:26px;background:#1b1c1e;"></div>
<div class="r" style="left:1719px;top:204px;width:1px;height:26px;background:#1b1c1e;"></div>
<div class="r" style="left:1747px;top:204px;width:1px;height:26px;background:#1b1c1e;"></div>
<div class="r" style="left:1775px;top:204px;width:1px;height:26px;background:#1b1c1e;"></div>
<svg class="r" style="left:1555px;top:206px;" width="22" height="22" viewBox="0 0 22 22"><rect x="1.5" y="6" width="19" height="13" rx="1.5" fill="#d8d8d8" stroke="#1a1a1a" stroke-width="1.4"/><rect x="4" y="3.5" width="5" height="3" fill="#d8d8d8" stroke="#1a1a1a" stroke-width="1"/><circle cx="12.5" cy="12.5" r="4.6" fill="#2a2a2a"/><circle cx="12.5" cy="12.5" r="2.6" fill="#a04848"/></svg>
<svg class="r" style="left:1583px;top:206px;" width="22" height="22" viewBox="0 0 22 22"><rect x="6" y="7" width="14" height="13" fill="#a8a490" stroke="#2a2a2a" stroke-width="1"/><rect x="3" y="3" width="13" height="13" fill="#9aa4b0" stroke="#2a2a2a" stroke-width="1"/><path d="M8 13 a2 2 0 1 0 3 0 V6 H13" stroke="#4a6a98" stroke-width="2" fill="none"/></svg>
<svg class="r" style="left:1611px;top:206px;" width="22" height="22" viewBox="0 0 22 22"><circle cx="6" cy="5" r="3.5" fill="#a8a878" opacity=".7"/><rect x="13" y="5" width="6" height="11" rx="2" fill="#6a82a8"/><circle cx="9" cy="16" r="4" fill="#9a9a9a"/></svg>
<svg class="r" style="left:1639px;top:206px;" width="22" height="22" viewBox="0 0 22 22"><circle cx="11" cy="11" r="8" fill="#4e6e88"/><path d="M6 8 q4 -3 6 1 q1 4 -2 5 q-3 -1 -4 -6 Z M13 13 q3 0 4 2 q-2 3 -4 1 Z" fill="#6a8a6a"/></svg>
<svg class="r" style="left:1667px;top:206px;" width="22" height="22" viewBox="0 0 22 22"><path d="M11 2 L19 6 V16 L11 20 L3 16 V6 Z" fill="#b08858"/><path d="M11 10 L19 6 V16 L11 20 Z" fill="#8e6a40"/><path d="M3 6 L11 2 L19 6 L11 10 Z" fill="#c8a070"/></svg>
<svg class="r" style="left:1695px;top:206px;" width="22" height="22" viewBox="0 0 22 22"><rect x="2" y="9" width="11" height="6" rx="3" fill="none" stroke="#a0a0a0" stroke-width="2.2" transform="rotate(-35 7 12)"/><rect x="9" y="6" width="11" height="6" rx="3" fill="none" stroke="#a0a0a0" stroke-width="2.2" transform="rotate(-35 14 9)"/></svg>
<svg class="r" style="left:1722px;top:206px;" width="22" height="22" viewBox="0 0 22 22"><circle cx="7" cy="7" r="4" fill="none" stroke="#8a8a8a" stroke-width="2"/><circle cx="15" cy="7" r="4" fill="none" stroke="#8a8a8a" stroke-width="2"/><rect x="4" y="11" width="12" height="7" fill="#8a8a8a"/><rect x="16" y="12" width="4" height="5" fill="#8a8a8a"/></svg>
<svg class="r" style="left:1750px;top:206px;" width="22" height="22" viewBox="0 0 22 22"><rect x="3" y="3" width="16" height="16" fill="#c8b8b8"/><rect x="3" y="3" width="4" height="4" fill="#7a3838"/><rect x="3" y="11" width="4" height="4" fill="#7a3838"/><rect x="7" y="7" width="4" height="4" fill="#7a3838"/><rect x="7" y="15" width="4" height="4" fill="#7a3838"/><rect x="11" y="3" width="4" height="4" fill="#7a3838"/><rect x="11" y="11" width="4" height="4" fill="#7a3838"/><rect x="15" y="7" width="4" height="4" fill="#7a3838"/><rect x="15" y="15" width="4" height="4" fill="#7a3838"/></svg>
<svg class="r" style="left:1778px;top:206px;" width="22" height="22" viewBox="0 0 22 22"><path d="M3 11 L9 18 L16 8" stroke="#4a5e84" stroke-width="3.2" fill="none"/><circle cx="16" cy="5" r="4" fill="#a8a8a8"/></svg>
<svg class="r" style="left:1902px;top:200px;" width="16" height="16" viewBox="0 0 16 16"><path d="M0 0 L16 16 M5 0 L16 11 M10 0 L16 6" stroke="#9a9a9a" stroke-width="1" fill="none" opacity="0.8"/></svg>
<div class="r" style="left:1896px;top:241px;width:19px;height:771px;background:#36393c;border:1px solid #2b2d30;border-radius:9px"></div>
<div class="r" style="left:1897px;top:242px;width:17px;height:328px;background:#5f6266;border-radius:8px"></div>
<svg class="r" style="left:1498px;top:249px;" width="24" height="24" viewBox="0 0 24 24"><path d="M3 21 L10 14" stroke="#111" stroke-width="3.5"/><path d="M3 21 L10 14" stroke="#f0f0f0" stroke-width="1.8"/><path d="M7 11 L13 17 L15 15 L14 12 L19 7 L20 8 L21 7 L17 3 L16 4 L17 5 L12 10 L9 9 Z" fill="#f0f0f0" stroke="#111" stroke-width="1"/></svg>
<svg class="r" style="left:1527px;top:249px;" width="24" height="24" viewBox="0 0 24 24"><circle cx="6" cy="5" r="3.5" fill="#e0e080"/><rect x="13" y="5" width="7" height="11" rx="2" fill="#6f9ad0"/><circle cx="10" cy="16" r="4.5" fill="#eee"/></svg>
<div class="t" style="left:1557px;top:255.46px;font-size:16px;color:#dcdcdc;">Scene</div>
<div class="r" style="left:1490px;top:284px;width:402px;height:1px;background:#26282a;"></div>
<div class="r" style="left:1490px;top:285px;width:402px;height:1px;background:#5e6164;"></div>
<svg class="r" style="left:1498px;top:294px;" width="14" height="14" viewBox="0 0 14 14"><path d="M2 1 H13 L7.5 11 Z" fill="#b8b8b8"/></svg>
<div class="t" style="left:1518px;top:294.46px;font-size:16px;color:#dcdcdc;">Render</div>
<svg class="r" style="left:1866px;top:299px;" width="20" height="10" viewBox="0 0 20 10"><rect x="2" y="1" width="2" height="2" fill="#8a8d90"/><rect x="2" y="5" width="2" height="2" fill="#8a8d90"/><rect x="6" y="1" width="2" height="2" fill="#8a8d90"/><rect x="6" y="5" width="2" height="2" fill="#8a8d90"/><rect x="10" y="1" width="2" height="2" fill="#8a8d90"/><rect x="10" y="5" width="2" height="2" fill="#8a8d90"/><rect x="14" y="1" width="2" height="2" fill="#8a8d90"/><rect x="14" y="5" width="2" height="2" fill="#8a8d90"/></svg>
<div class="r" style="left:1496px;top:328px;width:389px;height:29px;background:#27292c;border:1px solid #1c1d1f;border-radius:5px;"></div>
<div class="r" style="left:1624px;top:329px;width:1px;height:27px;background:#1b1c1e;"></div>
<div class="r" style="left:1754px;top:329px;width:1px;height:27px;background:#1b1c1e;"></div>
<svg class="r" style="left:1501px;top:331px;" width="24" height="22" viewBox="0 0 24 22"><rect x="2" y="7" width="16" height="13" fill="#ccc" stroke="#333" stroke-width="1"/><circle cx="10" cy="13" r="4" fill="#444"/><circle cx="10" cy="13" r="2.2" fill="#b33"/><path d="M18 1 V7 M15 4 H21" stroke="#f0e060" stroke-width="2"/></svg>
<div class="t" style="left:1545px;top:336.46px;font-size:16px;color:#dcdcdc;">Render</div>
<svg class="r" style="left:1629px;top:331px;" width="24" height="22" viewBox="0 0 24 22"><rect x="2" y="11" width="17" height="9" fill="#aaa" stroke="#333" stroke-width="1"/><path d="M2 9 L17 3" stroke="#eee" stroke-width="3" stroke-dasharray="3 2"/></svg>
<div class="t" style="left:1663px;top:336.46px;font-size:16px;color:#dcdcdc;">Animation</div>
<svg class="r" style="left:1759px;top:332px;" width="24" height="22" viewBox="0 0 24 22"><path d="M3 8 H7 L12 3 V19 L7 14 H3 Z" fill="#ddd"/><path d="M15 7 q3 4 0 8 M18 4 q6 7 0 14" stroke="#7aa6e0" stroke-width="2" fill="none"/></svg>
<div class="t" style="left:1809px;top:336.46px;font-size:16px;color:#dcdcdc;">Audio</div>
<div class="t" style="left:1507px;top:371.46px;font-size:16px;color:#dcdcdc;">Display:</div>
<div class="r" style="left:1632px;top:363px;width:252px;height:28px;background:#27292c;border:1px solid #1c1d1f;border-radius:5px;"></div>
<div class="t" style="left:1643px;top:371.46px;font-size:16px;color:#dcdcdc;">Image Editor</div>
<svg class="r" style="left:1869px;top:367px;" width="10" height="20" viewBox="0 0 10 20"><path d="M1.5 8 L5 2.5 L8.5 8 Z M1.5 12 L5 17.5 L8.5 12 Z" fill="#767b80"/></svg>
<div class="r" style="left:1856px;top:364px;width:1px;height:26px;background:#1b1c1e;"></div>
<div class="r" style="left:1857px;top:364px;width:27px;height:26px;background:#3f4246;border-radius:0 4px 4px 0"></div>
<svg class="r" style="left:1858px;top:366px;" width="24" height="22" viewBox="0 0 24 22"><path d="M6 10 V7 a4 4 0 0 1 8 0" stroke="#eee" stroke-width="2" fill="none"/><rect x="8" y="10" width="12" height="9" fill="#eee"/><rect x="13" y="13" width="2" height="3" fill="#444"/></svg>
<div class="r" style="left:1842px;top:364px;width:14px;height:26px;background:#27292c;"></div>
<svg class="r" style="left:1841px;top:367px;" width="10" height="20" viewBox="0 0 10 20"><path d="M1.5 8 L5 2.5 L8.5 8 Z M1.5 12 L5 17.5 L8.5 12 Z" fill="#767b80"/></svg>
<div class="t" style="left:1507px;top:405.46px;font-size:16px;color:#dcdcdc;">Feature Set:</div>
<div class="r" style="left:1632px;top:397px;width:252px;height:28px;background:#27292c;border:1px solid #1c1d1f;border-radius:5px;"></div>
<div class="t" style="left:1643px;top:405.46px;font-size:16px;color:#dcdcdc;">Supported</div>
<svg class="r" style="left:1869px;top:401px;" width="10" height="20" viewBox="0 0 10 20"><path d="M1.5 8 L5 2.5 L8.5 8 Z M1.5 12 L5 17.5 L8.5 12 Z" fill="#767b80"/></svg>
<div class="t" style="left:1507px;top:439.46px;font-size:16px;color:#dcdcdc;">Device:</div>
<div class="r" style="left:1632px;top:431px;width:252px;height:28px;background:#27292c;border:1px solid #1c1d1f;border-radius:5px;"></div>
<div class="t" style="left:1643px;top:439.46px;font-size:16px;color:#dcdcdc;">GPU Compute</div>
<svg class="r" style="left:1869px;top:435px;" width="10" height="20" viewBox="0 0 10 20"><path d="M1.5 8 L5 2.5 L8.5 8 Z M1.5 12 L5 17.5 L8.5 12 Z" fill="#767b80"/></svg>
<div class="r" style="left:1490px;top:468px;width:402px;height:1px;background:#26282a;"></div>
<div class="r" style="left:1490px;top:469px;width:402px;height:1px;background:#5e6164;"></div>
<svg class="r" style="left:1498px;top:478px;" width="14" height="14" viewBox="0 0 14 14"><path d="M2 1 H13 L7.5 11 Z" fill="#b8b8b8"/></svg>
<div class="t" style="left:1518px;top:478.46px;font-size:16px;color:#dcdcdc;">Dimensions</div>
<svg class="r" style="left:1866px;top:483px;" width="20" height="10" viewBox="0 0 20 10"><rect x="2" y="1" width="2" height="2" fill="#8a8d90"/><rect x="2" y="5" width="2" height="2" fill="#8a8d90"/><rect x="6" y="1" width="2" height="2" fill="#8a8d90"/><rect x="6" y="5" width="2" height="2" fill="#8a8d90"/><rect x="10" y="1" width="2" height="2" fill="#8a8d90"/><rect x="10" y="5" width="2" height="2" fill="#8a8d90"/><rect x="14" y="1" width="2" height="2" fill="#8a8d90"/><rect x="14" y="5" width="2" height="2" fill="#8a8d90"/></svg>
<div class="r" style="left:1497px;top:513px;width:388px;height:27px;background:#27292c;border:1px solid #1c1d1f;border-radius:5px;"></div>
<div class="t" style="left:1508px;top:520.46px;font-size:16px;color:#dcdcdc;">Render Presets</div>
<svg class="r" style="left:1813px;top:516px;" width="10" height="20" viewBox="0 0 10 20"><path d="M1.5 8 L5 2.5 L8.5 8 Z M1.5 12 L5 17.5 L8.5 12 Z" fill="#767b80"/></svg>
<div class="r" style="left:1828px;top:514px;width:1px;height:25px;background:#1b1c1e;"></div>
<div class="r" style="left:1856px;top:514px;width:1px;height:25px;background:#1b1c1e;"></div>
<svg class="r" style="left:1832px;top:516px;" width="20" height="20" viewBox="0 0 20 20"><path d="M10 3 V17 M3 10 H17" stroke="#f0f0f0" stroke-width="3"/></svg>
<svg class="r" style="left:1860px;top:516px;" width="20" height="20" viewBox="0 0 20 20"><path d="M3 10 H17" stroke="#f0f0f0" stroke-width="3"/></svg>
<div class="t" style="left:1507px;top:554.46px;font-size:16px;color:#dcdcdc;">Resolution:</div>
<div class="t" style="left:1707px;top:554.46px;font-size:16px;color:#dcdcdc;">Frame Range:</div>
<div class="r" style="left:1497px;top:575px;width:187px;height:82px;background:#868c93;border:1px solid #1f2022;border-radius:9px;overflow:hidden"></div>
<div class="t" style="left:1520px;top:582.46px;font-size:16px;color:#111;">X:</div>
<div class="t" style="right:257px;top:582.46px;font-size:16px;color:#111;">1920 px</div>
<svg class="r" style="left:1501px;top:581px;" width="10" height="16" viewBox="0 0 10 16"><path d="M7 4 L3 8 L7 12 Z" fill="#747a80"/></svg>
<svg class="r" style="left:1670px;top:581px;" width="10" height="16" viewBox="0 0 10 16"><path d="M3 4 L7 8 L3 12 Z" fill="#747a80"/></svg>
<div class="r" style="left:1498px;top:602px;width:185px;height:1px;background:#1f2022;"></div>
<div class="t" style="left:1520px;top:609.46px;font-size:16px;color:#111;">Y:</div>
<div class="t" style="right:257px;top:609.46px;font-size:16px;color:#111;">1080 px</div>
<svg class="r" style="left:1501px;top:608px;" width="10" height="16" viewBox="0 0 10 16"><path d="M7 4 L3 8 L7 12 Z" fill="#747a80"/></svg>
<svg class="r" style="left:1670px;top:608px;" width="10" height="16" viewBox="0 0 10 16"><path d="M3 4 L7 8 L3 12 Z" fill="#747a80"/></svg>
<div class="r" style="left:1498px;top:631px;width:185px;height:26px;background:#58606a;border-radius:0 0 9px 9px"></div>
<div class="r" style="left:1498px;top:630px;width:185px;height:1px;background:#1f2022;"></div>
<div class="t" style="right:257px;top:637.46px;font-size:16px;color:#111;">100%</div>
<div class="r" style="left:1697px;top:575px;width:187px;height:82px;background:#868c93;border:1px solid #1f2022;border-radius:9px;overflow:hidden"></div>
<div class="t" style="left:1720px;top:582.46px;font-size:16px;color:#111;">Start Frame:</div>
<div class="t" style="right:57px;top:582.46px;font-size:16px;color:#111;">1</div>
<svg class="r" style="left:1701px;top:581px;" width="10" height="16" viewBox="0 0 10 16"><path d="M7 4 L3 8 L7 12 Z" fill="#747a80"/></svg>
<svg class="r" style="left:1870px;top:581px;" width="10" height="16" viewBox="0 0 10 16"><path d="M3 4 L7 8 L3 12 Z" fill="#747a80"/></svg>
<div class="r" style="left:1698px;top:602px;width:185px;height:1px;background:#1f2022;"></div>
<div class="t" style="left:1720px;top:609.46px;font-size:16px;color:#111;">End Frame:</div>
<div class="t" style="right:57px;top:609.46px;font-size:16px;color:#111;">250</div>
<svg class="r" style="left:1701px;top:608px;" width="10" height="16" viewBox="0 0 10 16"><path d="M7 4 L3 8 L7 12 Z" fill="#747a80"/></svg>
<svg class="r" style="left:1870px;top:608px;" width="10" height="16" viewBox="0 0 10 16"><path d="M3 4 L7 8 L3 12 Z" fill="#747a80"/></svg>
<div class="r" style="left:1698px;top:630px;width:185px;height:1px;background:#1f2022;"></div>
<div class="t" style="left:1720px;top:637.46px;font-size:16px;color:#111;">Frame Step:</div>
<div class="t" style="right:57px;top:637.46px;font-size:16px;color:#111;">1</div>
<svg class="r" style="left:1701px;top:636px;" width="10" height="16" viewBox="0 0 10 16"><path d="M7 4 L3 8 L7 12 Z" fill="#747a80"/></svg>
<svg class="r" style="left:1870px;top:636px;" width="10" height="16" viewBox="0 0 10 16"><path d="M3 4 L7 8 L3 12 Z" fill="#747a80"/></svg>
<div class="t" style="left:1507px;top:666.46px;font-size:16px;color:#dcdcdc;">Aspect Ratio:</div>
<div class="t" style="left:1707px;top:666.46px;font-size:16px;color:#dcdcdc;">Frame Rate:</div>
<div class="r" style="left:1497px;top:687px;width:187px;height:54px;background:#868c93;border:1px solid #1f2022;border-radius:9px;overflow:hidden"></div>
<div class="t" style="left:1520px;top:694.46px;font-size:16px;color:#111;">X:</div>
<div class="t" style="right:257px;top:694.46px;font-size:16px;color:#111;">1.000</div>
<svg class="r" style="left:1501px;top:693px;" width="10" height="16" viewBox="0 0 10 16"><path d="M7 4 L3 8 L7 12 Z" fill="#747a80"/></svg>
<svg class="r" style="left:1670px;top:693px;" width="10" height="16" viewBox="0 0 10 16"><path d="M3 4 L7 8 L3 12 Z" fill="#747a80"/></svg>
<div class="r" style="left:1498px;top:714px;width:185px;height:1px;background:#1f2022;"></div>
<div class="t" style="left:1520px;top:721.46px;font-size:16px;color:#111;">Y:</div>
<div class="t" style="right:257px;top:721.46px;font-size:16px;color:#111;">1.000</div>
<svg class="r" style="left:1501px;top:720px;" width="10" height="16" viewBox="0 0 10 16"><path d="M7 4 L3 8 L7 12 Z" fill="#747a80"/></svg>
<svg class="r" style="left:1670px;top:720px;" width="10" height="16" viewBox="0 0 10 16"><path d="M3 4 L7 8 L3 12 Z" fill="#747a80"/></svg>
<div class="r" style="left:1697px;top:687px;width:187px;height:27px;background:#27292c;border:1px solid #1c1d1f;border-radius:5px;"></div>
<div class="t" style="left:1708px;top:695.46px;font-size:16px;color:#dcdcdc;">24 fps</div>
<svg class="r" style="left:1869px;top:690px;" width="10" height="20" viewBox="0 0 10 20"><path d="M1.5 8 L5 2.5 L8.5 8 Z M1.5 12 L5 17.5 L8.5 12 Z" fill="#767b80"/></svg>
<div class="t" style="left:1707px;top:722.46px;font-size:16px;color:#dcdcdc;">Time Remapping:</div>
<div class="r" style="left:1697px;top:743px;width:187px;height:27px;background:#868c93;border:1px solid #1f2022;border-radius:9px"></div>
<div class="r" style="left:1789px;top:744px;width:1px;height:25px;background:#1f2022;"></div>
<div class="t" style="left:1718px;top:750.46px;font-size:16px;color:#111;">Ol: 100</div>
<div class="t" style="left:1812px;top:750.46px;font-size:16px;color:#111;">N:</div>
<div class="t" style="right:58px;top:750.46px;font-size:16px;color:#111;">100</div>
<svg class="r" style="left:1701px;top:749px;" width="10" height="16" viewBox="0 0 10 16"><path d="M7 4 L3 8 L7 12 Z" fill="#747a80"/></svg>
<svg class="r" style="left:1793px;top:749px;" width="10" height="16" viewBox="0 0 10 16"><path d="M7 4 L3 8 L7 12 Z" fill="#747a80"/></svg>
<svg class="r" style="left:1773px;top:749px;" width="10" height="16" viewBox="0 0 10 16"><path d="M3 4 L7 8 L3 12 Z" fill="#747a80"/></svg>
<svg class="r" style="left:1867px;top:749px;" width="10" height="16" viewBox="0 0 10 16"><path d="M3 4 L7 8 L3 12 Z" fill="#747a80"/></svg>
<div class="r" style="left:1500px;top:748px;width:20px;height:20px;background:#2f3134;border:1px solid #1f2022;border-radius:5px"></div>
<div class="t" style="left:1530px;top:752.46px;font-size:16px;color:#dcdcdc;">Border</div>
<div class="r" style="left:1600px;top:748px;width:20px;height:20px;background:#2f3134;border:1px solid #1f2022;border-radius:5px"></div>
<div class="t" style="left:1630px;top:752.46px;font-size:16px;color:#8a8d90;">Crop</div>
<div class="r" style="left:1490px;top:781px;width:402px;height:1px;background:#26282a;"></div>
<div class="r" style="left:1490px;top:782px;width:402px;height:1px;background:#5e6164;"></div>
<svg class="r" style="left:1500px;top:789px;" width="14" height="14" viewBox="0 0 14 14"><path d="M2 1 V13 L12 7 Z" fill="#b8b8b8"/></svg>
<div class="t" style="left:1518px;top:792.46px;font-size:16px;color:#dcdcdc;">Metadata</div>
<svg class="r" style="left:1866px;top:797px;" width="20" height="10" viewBox="0 0 20 10"><rect x="2" y="1" width="2" height="2" fill="#8a8d90"/><rect x="2" y="5" width="2" height="2" fill="#8a8d90"/><rect x="6" y="1" width="2" height="2" fill="#8a8d90"/><rect x="6" y="5" width="2" height="2" fill="#8a8d90"/><rect x="10" y="1" width="2" height="2" fill="#8a8d90"/><rect x="10" y="5" width="2" height="2" fill="#8a8d90"/><rect x="14" y="1" width="2" height="2" fill="#8a8d90"/><rect x="14" y="5" width="2" height="2" fill="#8a8d90"/></svg>
<div class="r" style="left:1490px;top:813px;width:402px;height:1px;background:#26282a;"></div>
<div class="r" style="left:1490px;top:814px;width:402px;height:1px;background:#5e6164;"></div>
<svg class="r" style="left:1498px;top:824px;" width="14" height="14" viewBox="0 0 14 14"><path d="M2 1 H13 L7.5 11 Z" fill="#b8b8b8"/></svg>
<div class="t" style="left:1518px;top:824.46px;font-size:16px;color:#dcdcdc;">Output</div>
<svg class="r" style="left:1866px;top:829px;" width="20" height="10" viewBox="0 0 20 10"><rect x="2" y="1" width="2" height="2" fill="#8a8d90"/><rect x="2" y="5" width="2" height="2" fill="#8a8d90"/><rect x="6" y="1" width="2" height="2" fill="#8a8d90"/><rect x="6" y="5" width="2" height="2" fill="#8a8d90"/><rect x="10" y="1" width="2" height="2" fill="#8a8d90"/><rect x="10" y="5" width="2" height="2" fill="#8a8d90"/><rect x="14" y="1" width="2" height="2" fill="#8a8d90"/><rect x="14" y="5" width="2" height="2" fill="#8a8d90"/></svg>
<div class="r" style="left:1497px;top:859px;width:360px;height:27px;background:#7e848c;border:1px solid #1f2022;border-radius:9px 0 0 9px"></div>
<div class="t" style="left:1507px;top:866.46px;font-size:16px;color:#111;">/tmp\</div>
<div class="r" style="left:1856px;top:859px;width:29px;height:27px;background:#27292c;border:1px solid #1c1d1f;border-radius:5px;border-radius:0 9px 9px 0"></div>
<svg class="r" style="left:1859px;top:861px;" width="24" height="22" viewBox="0 0 24 22"><rect x="8" y="3" width="10" height="8" fill="#eee" stroke="#555" stroke-width="1"/><path d="M2 8 H8 L10 10 H20 V19 H2 Z" fill="#d8c890" stroke="#6a5a30" stroke-width="1"/></svg>
<div class="r" style="left:1500px;top:896px;width:20px;height:20px;background:#5b7fb5;border:1px solid #1f2022;border-radius:5px"></div>
<svg class="r" style="left:1500px;top:896px;" width="20" height="20" viewBox="0 0 20 20"><path d="M4 9 L9 14 L17 4" stroke="#1a2540" stroke-width="2.6" fill="none"/></svg>
<div class="t" style="left:1530px;top:900.46px;font-size:16px;color:#dcdcdc;">Overwrite</div>
<div class="r" style="left:1700px;top:896px;width:20px;height:20px;background:#5b7fb5;border:1px solid #1f2022;border-radius:5px"></div>
<svg class="r" style="left:1700px;top:896px;" width="20" height="20" viewBox="0 0 20 20"><path d="M4 9 L9 14 L17 4" stroke="#1a2540" stroke-width="2.6" fill="none"/></svg>
<div class="t" style="left:1730px;top:900.46px;font-size:16px;color:#dcdcdc;">File Extensions</div>
<div class="r" style="left:1500px;top:926px;width:20px;height:20px;background:#2f3134;border:1px solid #1f2022;border-radius:5px"></div>
<div class="t" style="left:1530px;top:930.46px;font-size:16px;color:#dcdcdc;">Placeholders</div>
<div class="r" style="left:1700px;top:926px;width:20px;height:20px;background:#2f3134;border:1px solid #1f2022;border-radius:5px"></div>
<div class="t" style="left:1730px;top:930.46px;font-size:16px;color:#dcdcdc;">Cache Result</div>
<div class="r" style="left:1497px;top:956px;width:188px;height:28px;background:#27292c;border:1px solid #1c1d1f;border-radius:5px;"></div>
<svg class="r" style="left:1502px;top:959px;" width="22" height="22" viewBox="0 0 22 22"><path d="M4 2 H14 L18 6 V20 H4 Z" fill="#f0f0f0" stroke="#555" stroke-width="1"/><path d="M5 12 q4 -3 7 0 t6 -1 V19 H5 Z" fill="#c04040"/><rect x="5" y="15" width="12" height="4" fill="#3a5a9a"/></svg>
<div class="t" style="left:1529px;top:964.46px;font-size:16px;color:#dcdcdc;">JPEG</div>
<svg class="r" style="left:1671px;top:960px;" width="10" height="20" viewBox="0 0 10 20"><path d="M1.5 8 L5 2.5 L8.5 8 Z M1.5 12 L5 17.5 L8.5 12 Z" fill="#767b80"/></svg>
<div class="r" style="left:1697px;top:956px;width:188px;height:28px;background:#27292c;border:1px solid #1c1d1f;border-radius:5px;"></div>
<div class="r" style="left:1789px;top:957px;width:1px;height:26px;background:#1b1c1e;"></div>
<div class="t" style="left:1643px;width:200px;text-align:center;top:964.46px;font-size:16px;color:#dcdcdc;">BW</div>
<div class="t" style="left:1736px;width:200px;text-align:center;top:964.46px;font-size:16px;color:#dcdcdc;">RGB</div>
<div class="r" style="left:1497px;top:987px;width:388px;height:30px;background:#5f6873;border:1px solid #1f2022;border-radius:10px"></div>
<div class="t" style="left:1517px;top:995.46px;font-size:16px;color:#111;">Quality:</div>
<div class="t" style="right:58px;top:995.46px;font-size:16px;color:#111;">100%</div>
<div class="r" style="left:1484px;top:887px;width:1px;height:127px;background:#0a0a0a;"></div>
</body></html>
